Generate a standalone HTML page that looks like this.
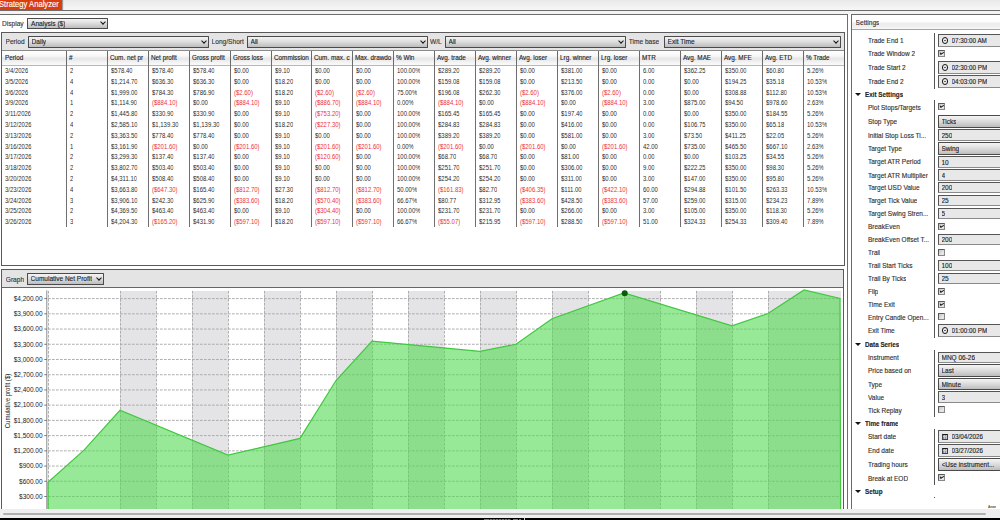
<!DOCTYPE html><html><head><meta charset="utf-8"><style>

*{margin:0;padding:0;box-sizing:border-box}
html,body{width:1000px;height:520px;overflow:hidden;background:#fff;font-family:"Liberation Sans",sans-serif;color:#222}
.a{position:absolute}
.t{position:absolute;white-space:nowrap;overflow:hidden;-webkit-text-stroke:0.12px currentColor}
.sel{position:absolute;border:1px solid #4a4a4a;border-radius:0.6px;background:linear-gradient(#f4f4f4,#dedede 45%,#bdbdbd)}
.chev{position:absolute;width:4px;height:4px;border-right:1.5px solid #111;border-bottom:1.5px solid #111;transform:rotate(45deg)}
.box{position:absolute;border:1px solid #8a8a8a;border-top-color:#555;border-left-color:#555;background:#e8e8e8}
.cb{position:absolute;width:7px;height:7px;border:1px solid #5a5a5a;border-right-color:#888;border-bottom-color:#888;background:linear-gradient(135deg,#c4c4c4,#e8e8e8 70%,#dcdcdc);border-radius:0.5px}
.chk{position:absolute;left:0.9px;top:1.3px;width:3.6px;height:2px;border-left:1.6px solid #111;border-bottom:1.6px solid #111;transform:rotate(-30deg)}

</style></head><body>
<div class="a" style="left:0;top:0;width:1000px;height:10px;background:linear-gradient(#e9e9e9,#f7f7f7)"></div>
<div class="a" style="left:0;top:0;width:62px;height:10px;background:#dc3d0c;box-shadow:1px 0 1px rgba(0,0,0,.35)"></div>
<div class="t" style="left:-0.6px;top:-0.4px;height:10px;line-height:9.4px;font-size:8.4px;color:#fff;transform:scaleX(0.91);transform-origin:0 0">Strategy Analyzer</div>
<div class="a" style="left:0;top:9.5px;width:1000px;height:1px;background:#6c6c6c"></div>
<div class="a" style="left:0;top:10.5px;width:1000px;height:3.5px;background:#f3f3f3"></div>
<div class="a" style="left:-1px;top:13.6px;width:848.8px;height:520px;border:1px solid #6e6e6e;background:#fff"></div>
<div class="t" style="left:2px;top:19px;line-height:9px;font-size:6.6px;color:#333">Display</div>
<div class="a" style="left:1px;top:32px;width:844px;height:234px;border:1px solid #5a5a5a;background:#fff"></div>
<div class="a" style="left:2px;top:33px;width:842px;height:17.5px;background:#e4e4e4"></div>
<div class="sel" style="left:27px;top:18px;width:81px;height:11px"></div>
<div class="t" style="left:31px;top:18.6px;line-height:9px;font-size:6.6px;color:#222">Analysis ($)</div>
<div class="chev" style="left:100.8px;top:20.4px"></div>
<div class="t" style="left:5.5px;top:37.1px;line-height:9px;font-size:6.6px;color:#333;">Period</div>
<div class="sel" style="left:28px;top:36px;width:181px;height:12px"></div>
<div class="t" style="left:31.5px;top:37.1px;line-height:9px;font-size:6.6px;color:#222">Daily</div>
<div class="chev" style="left:201.8px;top:38.900000000000006px"></div>
<div class="t" style="left:211.6px;top:37.1px;line-height:9px;font-size:6.6px;color:#333;">Long/Short</div>
<div class="sel" style="left:247px;top:36px;width:181px;height:12px"></div>
<div class="t" style="left:250.5px;top:37.1px;line-height:9px;font-size:6.6px;color:#222">All</div>
<div class="chev" style="left:420.8px;top:38.900000000000006px"></div>
<div class="t" style="left:430px;top:37.1px;line-height:9px;font-size:6.6px;color:#333;">W/L</div>
<div class="sel" style="left:445px;top:36px;width:181px;height:12px"></div>
<div class="t" style="left:448.5px;top:37.1px;line-height:9px;font-size:6.6px;color:#222">All</div>
<div class="chev" style="left:618.8px;top:38.900000000000006px"></div>
<div class="t" style="left:628.7px;top:37.1px;line-height:9px;font-size:6.6px;color:#333;">Time base</div>
<div class="sel" style="left:664px;top:36px;width:177px;height:12px"></div>
<div class="t" style="left:667.5px;top:37.1px;line-height:9px;font-size:6.6px;color:#222">Exit Time</div>
<div class="chev" style="left:833.8px;top:38.900000000000006px"></div>
<div class="a" style="left:2px;top:50px;width:842px;height:1px;background:#8a8a8a"></div>
<div class="a" style="left:2px;top:51px;width:842px;height:13.7px;background:linear-gradient(#ffffff,#f7f7f7 35%,#e6e6e6 55%,#f3f3f3 80%,#fafafa)"></div>
<div class="a" style="left:2px;top:64.6px;width:842px;height:0.8px;background:#b8b8b8"></div>
<div class="t" style="left:5.0px;top:52.9px;width:59.5px;line-height:9px;font-size:6.35px;color:#222">Period</div>
<div class="t" style="left:69.0px;top:52.9px;width:36.5px;line-height:9px;font-size:6.35px;color:#222">#</div>
<div class="t" style="left:110.0px;top:52.9px;width:36.5px;line-height:9px;font-size:6.35px;color:#222">Cum. net pr</div>
<div class="t" style="left:151.0px;top:52.9px;width:36.5px;line-height:9px;font-size:6.35px;color:#222">Net profit</div>
<div class="t" style="left:192.0px;top:52.9px;width:36.5px;line-height:9px;font-size:6.35px;color:#222">Gross profit</div>
<div class="t" style="left:233.0px;top:52.9px;width:36.5px;line-height:9px;font-size:6.35px;color:#222">Gross loss</div>
<div class="t" style="left:274.0px;top:52.9px;width:35.5px;line-height:9px;font-size:6.35px;color:#222">Commission</div>
<div class="t" style="left:314.0px;top:52.9px;width:36.5px;line-height:9px;font-size:6.35px;color:#222">Cum. max. c</div>
<div class="t" style="left:355.0px;top:52.9px;width:36.5px;line-height:9px;font-size:6.35px;color:#222">Max. drawdo</div>
<div class="t" style="left:396.0px;top:52.9px;width:36.5px;line-height:9px;font-size:6.35px;color:#222">% Win</div>
<div class="t" style="left:437.0px;top:52.9px;width:36.5px;line-height:9px;font-size:6.35px;color:#222">Avg. trade</div>
<div class="t" style="left:478.0px;top:52.9px;width:36.5px;line-height:9px;font-size:6.35px;color:#222">Avg. winner</div>
<div class="t" style="left:519.0px;top:52.9px;width:36.5px;line-height:9px;font-size:6.35px;color:#222">Avg. loser</div>
<div class="t" style="left:560.0px;top:52.9px;width:36.5px;line-height:9px;font-size:6.35px;color:#222">Lrg. winner</div>
<div class="t" style="left:601.0px;top:52.9px;width:36.5px;line-height:9px;font-size:6.35px;color:#222">Lrg. loser</div>
<div class="t" style="left:642.0px;top:52.9px;width:36.5px;line-height:9px;font-size:6.35px;color:#222">MTR</div>
<div class="t" style="left:683.0px;top:52.9px;width:36.5px;line-height:9px;font-size:6.35px;color:#222">Avg. MAE</div>
<div class="t" style="left:724.0px;top:52.9px;width:36.5px;line-height:9px;font-size:6.35px;color:#222">Avg. MFE</div>
<div class="t" style="left:765.0px;top:52.9px;width:36.5px;line-height:9px;font-size:6.35px;color:#222">Avg. ETD</div>
<div class="t" style="left:806.0px;top:52.9px;width:36.5px;line-height:9px;font-size:6.35px;color:#222">% Trade</div>
<div class="a" style="left:66px;top:50.8px;width:1px;height:14.2px;background:#6a6a6a"></div>
<div class="a" style="left:66px;top:65px;width:1px;height:162px;background:#6f6f6f"></div>
<div class="a" style="left:107px;top:50.8px;width:1px;height:14.2px;background:#6a6a6a"></div>
<div class="a" style="left:107px;top:65px;width:1px;height:162px;background:#6f6f6f"></div>
<div class="a" style="left:148px;top:50.8px;width:1px;height:14.2px;background:#6a6a6a"></div>
<div class="a" style="left:148px;top:65px;width:1px;height:162px;background:#6f6f6f"></div>
<div class="a" style="left:189px;top:50.8px;width:1px;height:14.2px;background:#6a6a6a"></div>
<div class="a" style="left:189px;top:65px;width:1px;height:162px;background:#6f6f6f"></div>
<div class="a" style="left:230px;top:50.8px;width:1px;height:14.2px;background:#6a6a6a"></div>
<div class="a" style="left:230px;top:65px;width:1px;height:162px;background:#6f6f6f"></div>
<div class="a" style="left:271px;top:50.8px;width:1px;height:14.2px;background:#6a6a6a"></div>
<div class="a" style="left:271px;top:65px;width:1px;height:162px;background:#6f6f6f"></div>
<div class="a" style="left:311px;top:50.8px;width:1px;height:14.2px;background:#6a6a6a"></div>
<div class="a" style="left:311px;top:65px;width:1px;height:162px;background:#6f6f6f"></div>
<div class="a" style="left:352px;top:50.8px;width:1px;height:14.2px;background:#6a6a6a"></div>
<div class="a" style="left:352px;top:65px;width:1px;height:162px;background:#6f6f6f"></div>
<div class="a" style="left:393px;top:50.8px;width:1px;height:14.2px;background:#6a6a6a"></div>
<div class="a" style="left:393px;top:65px;width:1px;height:162px;background:#6f6f6f"></div>
<div class="a" style="left:434px;top:50.8px;width:1px;height:14.2px;background:#6a6a6a"></div>
<div class="a" style="left:434px;top:65px;width:1px;height:162px;background:#6f6f6f"></div>
<div class="a" style="left:475px;top:50.8px;width:1px;height:14.2px;background:#6a6a6a"></div>
<div class="a" style="left:475px;top:65px;width:1px;height:162px;background:#6f6f6f"></div>
<div class="a" style="left:516px;top:50.8px;width:1px;height:14.2px;background:#6a6a6a"></div>
<div class="a" style="left:516px;top:65px;width:1px;height:162px;background:#6f6f6f"></div>
<div class="a" style="left:557px;top:50.8px;width:1px;height:14.2px;background:#6a6a6a"></div>
<div class="a" style="left:557px;top:65px;width:1px;height:162px;background:#6f6f6f"></div>
<div class="a" style="left:598px;top:50.8px;width:1px;height:14.2px;background:#6a6a6a"></div>
<div class="a" style="left:598px;top:65px;width:1px;height:162px;background:#6f6f6f"></div>
<div class="a" style="left:639px;top:50.8px;width:1px;height:14.2px;background:#6a6a6a"></div>
<div class="a" style="left:639px;top:65px;width:1px;height:162px;background:#6f6f6f"></div>
<div class="a" style="left:680px;top:50.8px;width:1px;height:14.2px;background:#6a6a6a"></div>
<div class="a" style="left:680px;top:65px;width:1px;height:162px;background:#6f6f6f"></div>
<div class="a" style="left:721px;top:50.8px;width:1px;height:14.2px;background:#6a6a6a"></div>
<div class="a" style="left:721px;top:65px;width:1px;height:162px;background:#6f6f6f"></div>
<div class="a" style="left:762px;top:50.8px;width:1px;height:14.2px;background:#6a6a6a"></div>
<div class="a" style="left:762px;top:65px;width:1px;height:162px;background:#6f6f6f"></div>
<div class="a" style="left:803px;top:50.8px;width:1px;height:14.2px;background:#6a6a6a"></div>
<div class="a" style="left:803px;top:65px;width:1px;height:162px;background:#6f6f6f"></div>
<div class="t" style="left:5.3px;top:66.1px;line-height:9px;font-size:7.2px;color:#2c2c2c;-webkit-text-stroke:0;transform:scaleX(0.83);transform-origin:0 0">3/4/2026</div>
<div class="t" style="left:70.3px;top:66.1px;line-height:9px;font-size:7.2px;color:#2c2c2c;-webkit-text-stroke:0;transform:scaleX(0.83);transform-origin:0 0">2</div>
<div class="t" style="left:111.3px;top:66.1px;line-height:9px;font-size:7.2px;color:#2c2c2c;-webkit-text-stroke:0;transform:scaleX(0.83);transform-origin:0 0">$578.40</div>
<div class="t" style="left:152.3px;top:66.1px;line-height:9px;font-size:7.2px;color:#2c2c2c;-webkit-text-stroke:0;transform:scaleX(0.83);transform-origin:0 0">$578.40</div>
<div class="t" style="left:193.3px;top:66.1px;line-height:9px;font-size:7.2px;color:#2c2c2c;-webkit-text-stroke:0;transform:scaleX(0.83);transform-origin:0 0">$578.40</div>
<div class="t" style="left:234.3px;top:66.1px;line-height:9px;font-size:7.2px;color:#2c2c2c;-webkit-text-stroke:0;transform:scaleX(0.83);transform-origin:0 0">$0.00</div>
<div class="t" style="left:275.3px;top:66.1px;line-height:9px;font-size:7.2px;color:#2c2c2c;-webkit-text-stroke:0;transform:scaleX(0.83);transform-origin:0 0">$9.10</div>
<div class="t" style="left:315.3px;top:66.1px;line-height:9px;font-size:7.2px;color:#2c2c2c;-webkit-text-stroke:0;transform:scaleX(0.83);transform-origin:0 0">$0.00</div>
<div class="t" style="left:356.3px;top:66.1px;line-height:9px;font-size:7.2px;color:#2c2c2c;-webkit-text-stroke:0;transform:scaleX(0.83);transform-origin:0 0">$0.00</div>
<div class="t" style="left:397.3px;top:66.1px;line-height:9px;font-size:7.2px;color:#2c2c2c;-webkit-text-stroke:0;transform:scaleX(0.83);transform-origin:0 0">100.00%</div>
<div class="t" style="left:438.3px;top:66.1px;line-height:9px;font-size:7.2px;color:#2c2c2c;-webkit-text-stroke:0;transform:scaleX(0.83);transform-origin:0 0">$289.20</div>
<div class="t" style="left:479.3px;top:66.1px;line-height:9px;font-size:7.2px;color:#2c2c2c;-webkit-text-stroke:0;transform:scaleX(0.83);transform-origin:0 0">$289.20</div>
<div class="t" style="left:520.3px;top:66.1px;line-height:9px;font-size:7.2px;color:#2c2c2c;-webkit-text-stroke:0;transform:scaleX(0.83);transform-origin:0 0">$0.00</div>
<div class="t" style="left:561.3px;top:66.1px;line-height:9px;font-size:7.2px;color:#2c2c2c;-webkit-text-stroke:0;transform:scaleX(0.83);transform-origin:0 0">$381.00</div>
<div class="t" style="left:602.3px;top:66.1px;line-height:9px;font-size:7.2px;color:#2c2c2c;-webkit-text-stroke:0;transform:scaleX(0.83);transform-origin:0 0">$0.00</div>
<div class="t" style="left:643.3px;top:66.1px;line-height:9px;font-size:7.2px;color:#2c2c2c;-webkit-text-stroke:0;transform:scaleX(0.83);transform-origin:0 0">6.00</div>
<div class="t" style="left:684.3px;top:66.1px;line-height:9px;font-size:7.2px;color:#2c2c2c;-webkit-text-stroke:0;transform:scaleX(0.83);transform-origin:0 0">$362.25</div>
<div class="t" style="left:725.3px;top:66.1px;line-height:9px;font-size:7.2px;color:#2c2c2c;-webkit-text-stroke:0;transform:scaleX(0.83);transform-origin:0 0">$350.00</div>
<div class="t" style="left:766.3px;top:66.1px;line-height:9px;font-size:7.2px;color:#2c2c2c;-webkit-text-stroke:0;transform:scaleX(0.83);transform-origin:0 0">$60.80</div>
<div class="t" style="left:807.3px;top:66.1px;line-height:9px;font-size:7.2px;color:#2c2c2c;-webkit-text-stroke:0;transform:scaleX(0.83);transform-origin:0 0">5.26%</div>
<div class="t" style="left:5.3px;top:76.89299999999999px;line-height:9px;font-size:7.2px;color:#2c2c2c;-webkit-text-stroke:0;transform:scaleX(0.83);transform-origin:0 0">3/5/2026</div>
<div class="t" style="left:70.3px;top:76.89299999999999px;line-height:9px;font-size:7.2px;color:#2c2c2c;-webkit-text-stroke:0;transform:scaleX(0.83);transform-origin:0 0">4</div>
<div class="t" style="left:111.3px;top:76.89299999999999px;line-height:9px;font-size:7.2px;color:#2c2c2c;-webkit-text-stroke:0;transform:scaleX(0.83);transform-origin:0 0">$1,214.70</div>
<div class="t" style="left:152.3px;top:76.89299999999999px;line-height:9px;font-size:7.2px;color:#2c2c2c;-webkit-text-stroke:0;transform:scaleX(0.83);transform-origin:0 0">$636.30</div>
<div class="t" style="left:193.3px;top:76.89299999999999px;line-height:9px;font-size:7.2px;color:#2c2c2c;-webkit-text-stroke:0;transform:scaleX(0.83);transform-origin:0 0">$636.30</div>
<div class="t" style="left:234.3px;top:76.89299999999999px;line-height:9px;font-size:7.2px;color:#2c2c2c;-webkit-text-stroke:0;transform:scaleX(0.83);transform-origin:0 0">$0.00</div>
<div class="t" style="left:275.3px;top:76.89299999999999px;line-height:9px;font-size:7.2px;color:#2c2c2c;-webkit-text-stroke:0;transform:scaleX(0.83);transform-origin:0 0">$18.20</div>
<div class="t" style="left:315.3px;top:76.89299999999999px;line-height:9px;font-size:7.2px;color:#2c2c2c;-webkit-text-stroke:0;transform:scaleX(0.83);transform-origin:0 0">$0.00</div>
<div class="t" style="left:356.3px;top:76.89299999999999px;line-height:9px;font-size:7.2px;color:#2c2c2c;-webkit-text-stroke:0;transform:scaleX(0.83);transform-origin:0 0">$0.00</div>
<div class="t" style="left:397.3px;top:76.89299999999999px;line-height:9px;font-size:7.2px;color:#2c2c2c;-webkit-text-stroke:0;transform:scaleX(0.83);transform-origin:0 0">100.00%</div>
<div class="t" style="left:438.3px;top:76.89299999999999px;line-height:9px;font-size:7.2px;color:#2c2c2c;-webkit-text-stroke:0;transform:scaleX(0.83);transform-origin:0 0">$159.08</div>
<div class="t" style="left:479.3px;top:76.89299999999999px;line-height:9px;font-size:7.2px;color:#2c2c2c;-webkit-text-stroke:0;transform:scaleX(0.83);transform-origin:0 0">$159.08</div>
<div class="t" style="left:520.3px;top:76.89299999999999px;line-height:9px;font-size:7.2px;color:#2c2c2c;-webkit-text-stroke:0;transform:scaleX(0.83);transform-origin:0 0">$0.00</div>
<div class="t" style="left:561.3px;top:76.89299999999999px;line-height:9px;font-size:7.2px;color:#2c2c2c;-webkit-text-stroke:0;transform:scaleX(0.83);transform-origin:0 0">$213.50</div>
<div class="t" style="left:602.3px;top:76.89299999999999px;line-height:9px;font-size:7.2px;color:#2c2c2c;-webkit-text-stroke:0;transform:scaleX(0.83);transform-origin:0 0">$0.00</div>
<div class="t" style="left:643.3px;top:76.89299999999999px;line-height:9px;font-size:7.2px;color:#2c2c2c;-webkit-text-stroke:0;transform:scaleX(0.83);transform-origin:0 0">0.00</div>
<div class="t" style="left:684.3px;top:76.89299999999999px;line-height:9px;font-size:7.2px;color:#2c2c2c;-webkit-text-stroke:0;transform:scaleX(0.83);transform-origin:0 0">$0.00</div>
<div class="t" style="left:725.3px;top:76.89299999999999px;line-height:9px;font-size:7.2px;color:#2c2c2c;-webkit-text-stroke:0;transform:scaleX(0.83);transform-origin:0 0">$194.25</div>
<div class="t" style="left:766.3px;top:76.89299999999999px;line-height:9px;font-size:7.2px;color:#2c2c2c;-webkit-text-stroke:0;transform:scaleX(0.83);transform-origin:0 0">$35.18</div>
<div class="t" style="left:807.3px;top:76.89299999999999px;line-height:9px;font-size:7.2px;color:#2c2c2c;-webkit-text-stroke:0;transform:scaleX(0.83);transform-origin:0 0">10.53%</div>
<div class="t" style="left:5.3px;top:87.68599999999999px;line-height:9px;font-size:7.2px;color:#2c2c2c;-webkit-text-stroke:0;transform:scaleX(0.83);transform-origin:0 0">3/6/2026</div>
<div class="t" style="left:70.3px;top:87.68599999999999px;line-height:9px;font-size:7.2px;color:#2c2c2c;-webkit-text-stroke:0;transform:scaleX(0.83);transform-origin:0 0">4</div>
<div class="t" style="left:111.3px;top:87.68599999999999px;line-height:9px;font-size:7.2px;color:#2c2c2c;-webkit-text-stroke:0;transform:scaleX(0.83);transform-origin:0 0">$1,999.00</div>
<div class="t" style="left:152.3px;top:87.68599999999999px;line-height:9px;font-size:7.2px;color:#2c2c2c;-webkit-text-stroke:0;transform:scaleX(0.83);transform-origin:0 0">$784.30</div>
<div class="t" style="left:193.3px;top:87.68599999999999px;line-height:9px;font-size:7.2px;color:#2c2c2c;-webkit-text-stroke:0;transform:scaleX(0.83);transform-origin:0 0">$786.90</div>
<div class="t" style="left:234.3px;top:87.68599999999999px;line-height:9px;font-size:7.2px;color:#ee3038;-webkit-text-stroke:0;transform:scaleX(0.83);transform-origin:0 0">($2.60)</div>
<div class="t" style="left:275.3px;top:87.68599999999999px;line-height:9px;font-size:7.2px;color:#2c2c2c;-webkit-text-stroke:0;transform:scaleX(0.83);transform-origin:0 0">$18.20</div>
<div class="t" style="left:315.3px;top:87.68599999999999px;line-height:9px;font-size:7.2px;color:#ee3038;-webkit-text-stroke:0;transform:scaleX(0.83);transform-origin:0 0">($2.60)</div>
<div class="t" style="left:356.3px;top:87.68599999999999px;line-height:9px;font-size:7.2px;color:#ee3038;-webkit-text-stroke:0;transform:scaleX(0.83);transform-origin:0 0">($2.60)</div>
<div class="t" style="left:397.3px;top:87.68599999999999px;line-height:9px;font-size:7.2px;color:#2c2c2c;-webkit-text-stroke:0;transform:scaleX(0.83);transform-origin:0 0">75.00%</div>
<div class="t" style="left:438.3px;top:87.68599999999999px;line-height:9px;font-size:7.2px;color:#2c2c2c;-webkit-text-stroke:0;transform:scaleX(0.83);transform-origin:0 0">$196.08</div>
<div class="t" style="left:479.3px;top:87.68599999999999px;line-height:9px;font-size:7.2px;color:#2c2c2c;-webkit-text-stroke:0;transform:scaleX(0.83);transform-origin:0 0">$262.30</div>
<div class="t" style="left:520.3px;top:87.68599999999999px;line-height:9px;font-size:7.2px;color:#ee3038;-webkit-text-stroke:0;transform:scaleX(0.83);transform-origin:0 0">($2.60)</div>
<div class="t" style="left:561.3px;top:87.68599999999999px;line-height:9px;font-size:7.2px;color:#2c2c2c;-webkit-text-stroke:0;transform:scaleX(0.83);transform-origin:0 0">$376.00</div>
<div class="t" style="left:602.3px;top:87.68599999999999px;line-height:9px;font-size:7.2px;color:#ee3038;-webkit-text-stroke:0;transform:scaleX(0.83);transform-origin:0 0">($2.60)</div>
<div class="t" style="left:643.3px;top:87.68599999999999px;line-height:9px;font-size:7.2px;color:#2c2c2c;-webkit-text-stroke:0;transform:scaleX(0.83);transform-origin:0 0">0.00</div>
<div class="t" style="left:684.3px;top:87.68599999999999px;line-height:9px;font-size:7.2px;color:#2c2c2c;-webkit-text-stroke:0;transform:scaleX(0.83);transform-origin:0 0">$0.00</div>
<div class="t" style="left:725.3px;top:87.68599999999999px;line-height:9px;font-size:7.2px;color:#2c2c2c;-webkit-text-stroke:0;transform:scaleX(0.83);transform-origin:0 0">$308.88</div>
<div class="t" style="left:766.3px;top:87.68599999999999px;line-height:9px;font-size:7.2px;color:#2c2c2c;-webkit-text-stroke:0;transform:scaleX(0.83);transform-origin:0 0">$112.80</div>
<div class="t" style="left:807.3px;top:87.68599999999999px;line-height:9px;font-size:7.2px;color:#2c2c2c;-webkit-text-stroke:0;transform:scaleX(0.83);transform-origin:0 0">10.53%</div>
<div class="t" style="left:5.3px;top:98.479px;line-height:9px;font-size:7.2px;color:#2c2c2c;-webkit-text-stroke:0;transform:scaleX(0.83);transform-origin:0 0">3/9/2026</div>
<div class="t" style="left:70.3px;top:98.479px;line-height:9px;font-size:7.2px;color:#2c2c2c;-webkit-text-stroke:0;transform:scaleX(0.83);transform-origin:0 0">1</div>
<div class="t" style="left:111.3px;top:98.479px;line-height:9px;font-size:7.2px;color:#2c2c2c;-webkit-text-stroke:0;transform:scaleX(0.83);transform-origin:0 0">$1,114.90</div>
<div class="t" style="left:152.3px;top:98.479px;line-height:9px;font-size:7.2px;color:#ee3038;-webkit-text-stroke:0;transform:scaleX(0.83);transform-origin:0 0">($884.10)</div>
<div class="t" style="left:193.3px;top:98.479px;line-height:9px;font-size:7.2px;color:#2c2c2c;-webkit-text-stroke:0;transform:scaleX(0.83);transform-origin:0 0">$0.00</div>
<div class="t" style="left:234.3px;top:98.479px;line-height:9px;font-size:7.2px;color:#ee3038;-webkit-text-stroke:0;transform:scaleX(0.83);transform-origin:0 0">($884.10)</div>
<div class="t" style="left:275.3px;top:98.479px;line-height:9px;font-size:7.2px;color:#2c2c2c;-webkit-text-stroke:0;transform:scaleX(0.83);transform-origin:0 0">$9.10</div>
<div class="t" style="left:315.3px;top:98.479px;line-height:9px;font-size:7.2px;color:#ee3038;-webkit-text-stroke:0;transform:scaleX(0.83);transform-origin:0 0">($886.70)</div>
<div class="t" style="left:356.3px;top:98.479px;line-height:9px;font-size:7.2px;color:#ee3038;-webkit-text-stroke:0;transform:scaleX(0.83);transform-origin:0 0">($884.10)</div>
<div class="t" style="left:397.3px;top:98.479px;line-height:9px;font-size:7.2px;color:#2c2c2c;-webkit-text-stroke:0;transform:scaleX(0.83);transform-origin:0 0">0.00%</div>
<div class="t" style="left:438.3px;top:98.479px;line-height:9px;font-size:7.2px;color:#ee3038;-webkit-text-stroke:0;transform:scaleX(0.83);transform-origin:0 0">($884.10)</div>
<div class="t" style="left:479.3px;top:98.479px;line-height:9px;font-size:7.2px;color:#2c2c2c;-webkit-text-stroke:0;transform:scaleX(0.83);transform-origin:0 0">$0.00</div>
<div class="t" style="left:520.3px;top:98.479px;line-height:9px;font-size:7.2px;color:#ee3038;-webkit-text-stroke:0;transform:scaleX(0.83);transform-origin:0 0">($884.10)</div>
<div class="t" style="left:561.3px;top:98.479px;line-height:9px;font-size:7.2px;color:#2c2c2c;-webkit-text-stroke:0;transform:scaleX(0.83);transform-origin:0 0">$0.00</div>
<div class="t" style="left:602.3px;top:98.479px;line-height:9px;font-size:7.2px;color:#ee3038;-webkit-text-stroke:0;transform:scaleX(0.83);transform-origin:0 0">($884.10)</div>
<div class="t" style="left:643.3px;top:98.479px;line-height:9px;font-size:7.2px;color:#2c2c2c;-webkit-text-stroke:0;transform:scaleX(0.83);transform-origin:0 0">3.00</div>
<div class="t" style="left:684.3px;top:98.479px;line-height:9px;font-size:7.2px;color:#2c2c2c;-webkit-text-stroke:0;transform:scaleX(0.83);transform-origin:0 0">$875.00</div>
<div class="t" style="left:725.3px;top:98.479px;line-height:9px;font-size:7.2px;color:#2c2c2c;-webkit-text-stroke:0;transform:scaleX(0.83);transform-origin:0 0">$94.50</div>
<div class="t" style="left:766.3px;top:98.479px;line-height:9px;font-size:7.2px;color:#2c2c2c;-webkit-text-stroke:0;transform:scaleX(0.83);transform-origin:0 0">$978.60</div>
<div class="t" style="left:807.3px;top:98.479px;line-height:9px;font-size:7.2px;color:#2c2c2c;-webkit-text-stroke:0;transform:scaleX(0.83);transform-origin:0 0">2.63%</div>
<div class="t" style="left:5.3px;top:109.27199999999999px;line-height:9px;font-size:7.2px;color:#2c2c2c;-webkit-text-stroke:0;transform:scaleX(0.83);transform-origin:0 0">3/11/2026</div>
<div class="t" style="left:70.3px;top:109.27199999999999px;line-height:9px;font-size:7.2px;color:#2c2c2c;-webkit-text-stroke:0;transform:scaleX(0.83);transform-origin:0 0">2</div>
<div class="t" style="left:111.3px;top:109.27199999999999px;line-height:9px;font-size:7.2px;color:#2c2c2c;-webkit-text-stroke:0;transform:scaleX(0.83);transform-origin:0 0">$1,445.80</div>
<div class="t" style="left:152.3px;top:109.27199999999999px;line-height:9px;font-size:7.2px;color:#2c2c2c;-webkit-text-stroke:0;transform:scaleX(0.83);transform-origin:0 0">$330.90</div>
<div class="t" style="left:193.3px;top:109.27199999999999px;line-height:9px;font-size:7.2px;color:#2c2c2c;-webkit-text-stroke:0;transform:scaleX(0.83);transform-origin:0 0">$330.90</div>
<div class="t" style="left:234.3px;top:109.27199999999999px;line-height:9px;font-size:7.2px;color:#2c2c2c;-webkit-text-stroke:0;transform:scaleX(0.83);transform-origin:0 0">$0.00</div>
<div class="t" style="left:275.3px;top:109.27199999999999px;line-height:9px;font-size:7.2px;color:#2c2c2c;-webkit-text-stroke:0;transform:scaleX(0.83);transform-origin:0 0">$9.10</div>
<div class="t" style="left:315.3px;top:109.27199999999999px;line-height:9px;font-size:7.2px;color:#ee3038;-webkit-text-stroke:0;transform:scaleX(0.83);transform-origin:0 0">($753.20)</div>
<div class="t" style="left:356.3px;top:109.27199999999999px;line-height:9px;font-size:7.2px;color:#2c2c2c;-webkit-text-stroke:0;transform:scaleX(0.83);transform-origin:0 0">$0.00</div>
<div class="t" style="left:397.3px;top:109.27199999999999px;line-height:9px;font-size:7.2px;color:#2c2c2c;-webkit-text-stroke:0;transform:scaleX(0.83);transform-origin:0 0">100.00%</div>
<div class="t" style="left:438.3px;top:109.27199999999999px;line-height:9px;font-size:7.2px;color:#2c2c2c;-webkit-text-stroke:0;transform:scaleX(0.83);transform-origin:0 0">$165.45</div>
<div class="t" style="left:479.3px;top:109.27199999999999px;line-height:9px;font-size:7.2px;color:#2c2c2c;-webkit-text-stroke:0;transform:scaleX(0.83);transform-origin:0 0">$165.45</div>
<div class="t" style="left:520.3px;top:109.27199999999999px;line-height:9px;font-size:7.2px;color:#2c2c2c;-webkit-text-stroke:0;transform:scaleX(0.83);transform-origin:0 0">$0.00</div>
<div class="t" style="left:561.3px;top:109.27199999999999px;line-height:9px;font-size:7.2px;color:#2c2c2c;-webkit-text-stroke:0;transform:scaleX(0.83);transform-origin:0 0">$197.40</div>
<div class="t" style="left:602.3px;top:109.27199999999999px;line-height:9px;font-size:7.2px;color:#2c2c2c;-webkit-text-stroke:0;transform:scaleX(0.83);transform-origin:0 0">$0.00</div>
<div class="t" style="left:643.3px;top:109.27199999999999px;line-height:9px;font-size:7.2px;color:#2c2c2c;-webkit-text-stroke:0;transform:scaleX(0.83);transform-origin:0 0">0.00</div>
<div class="t" style="left:684.3px;top:109.27199999999999px;line-height:9px;font-size:7.2px;color:#2c2c2c;-webkit-text-stroke:0;transform:scaleX(0.83);transform-origin:0 0">$0.00</div>
<div class="t" style="left:725.3px;top:109.27199999999999px;line-height:9px;font-size:7.2px;color:#2c2c2c;-webkit-text-stroke:0;transform:scaleX(0.83);transform-origin:0 0">$350.00</div>
<div class="t" style="left:766.3px;top:109.27199999999999px;line-height:9px;font-size:7.2px;color:#2c2c2c;-webkit-text-stroke:0;transform:scaleX(0.83);transform-origin:0 0">$184.55</div>
<div class="t" style="left:807.3px;top:109.27199999999999px;line-height:9px;font-size:7.2px;color:#2c2c2c;-webkit-text-stroke:0;transform:scaleX(0.83);transform-origin:0 0">5.26%</div>
<div class="t" style="left:5.3px;top:120.06499999999998px;line-height:9px;font-size:7.2px;color:#2c2c2c;-webkit-text-stroke:0;transform:scaleX(0.83);transform-origin:0 0">3/12/2026</div>
<div class="t" style="left:70.3px;top:120.06499999999998px;line-height:9px;font-size:7.2px;color:#2c2c2c;-webkit-text-stroke:0;transform:scaleX(0.83);transform-origin:0 0">4</div>
<div class="t" style="left:111.3px;top:120.06499999999998px;line-height:9px;font-size:7.2px;color:#2c2c2c;-webkit-text-stroke:0;transform:scaleX(0.83);transform-origin:0 0">$2,585.10</div>
<div class="t" style="left:152.3px;top:120.06499999999998px;line-height:9px;font-size:7.2px;color:#2c2c2c;-webkit-text-stroke:0;transform:scaleX(0.83);transform-origin:0 0">$1,139.30</div>
<div class="t" style="left:193.3px;top:120.06499999999998px;line-height:9px;font-size:7.2px;color:#2c2c2c;-webkit-text-stroke:0;transform:scaleX(0.83);transform-origin:0 0">$1,139.30</div>
<div class="t" style="left:234.3px;top:120.06499999999998px;line-height:9px;font-size:7.2px;color:#2c2c2c;-webkit-text-stroke:0;transform:scaleX(0.83);transform-origin:0 0">$0.00</div>
<div class="t" style="left:275.3px;top:120.06499999999998px;line-height:9px;font-size:7.2px;color:#2c2c2c;-webkit-text-stroke:0;transform:scaleX(0.83);transform-origin:0 0">$18.20</div>
<div class="t" style="left:315.3px;top:120.06499999999998px;line-height:9px;font-size:7.2px;color:#ee3038;-webkit-text-stroke:0;transform:scaleX(0.83);transform-origin:0 0">($227.30)</div>
<div class="t" style="left:356.3px;top:120.06499999999998px;line-height:9px;font-size:7.2px;color:#2c2c2c;-webkit-text-stroke:0;transform:scaleX(0.83);transform-origin:0 0">$0.00</div>
<div class="t" style="left:397.3px;top:120.06499999999998px;line-height:9px;font-size:7.2px;color:#2c2c2c;-webkit-text-stroke:0;transform:scaleX(0.83);transform-origin:0 0">100.00%</div>
<div class="t" style="left:438.3px;top:120.06499999999998px;line-height:9px;font-size:7.2px;color:#2c2c2c;-webkit-text-stroke:0;transform:scaleX(0.83);transform-origin:0 0">$284.83</div>
<div class="t" style="left:479.3px;top:120.06499999999998px;line-height:9px;font-size:7.2px;color:#2c2c2c;-webkit-text-stroke:0;transform:scaleX(0.83);transform-origin:0 0">$284.83</div>
<div class="t" style="left:520.3px;top:120.06499999999998px;line-height:9px;font-size:7.2px;color:#2c2c2c;-webkit-text-stroke:0;transform:scaleX(0.83);transform-origin:0 0">$0.00</div>
<div class="t" style="left:561.3px;top:120.06499999999998px;line-height:9px;font-size:7.2px;color:#2c2c2c;-webkit-text-stroke:0;transform:scaleX(0.83);transform-origin:0 0">$416.00</div>
<div class="t" style="left:602.3px;top:120.06499999999998px;line-height:9px;font-size:7.2px;color:#2c2c2c;-webkit-text-stroke:0;transform:scaleX(0.83);transform-origin:0 0">$0.00</div>
<div class="t" style="left:643.3px;top:120.06499999999998px;line-height:9px;font-size:7.2px;color:#2c2c2c;-webkit-text-stroke:0;transform:scaleX(0.83);transform-origin:0 0">0.00</div>
<div class="t" style="left:684.3px;top:120.06499999999998px;line-height:9px;font-size:7.2px;color:#2c2c2c;-webkit-text-stroke:0;transform:scaleX(0.83);transform-origin:0 0">$106.75</div>
<div class="t" style="left:725.3px;top:120.06499999999998px;line-height:9px;font-size:7.2px;color:#2c2c2c;-webkit-text-stroke:0;transform:scaleX(0.83);transform-origin:0 0">$350.00</div>
<div class="t" style="left:766.3px;top:120.06499999999998px;line-height:9px;font-size:7.2px;color:#2c2c2c;-webkit-text-stroke:0;transform:scaleX(0.83);transform-origin:0 0">$65.18</div>
<div class="t" style="left:807.3px;top:120.06499999999998px;line-height:9px;font-size:7.2px;color:#2c2c2c;-webkit-text-stroke:0;transform:scaleX(0.83);transform-origin:0 0">10.53%</div>
<div class="t" style="left:5.3px;top:130.858px;line-height:9px;font-size:7.2px;color:#2c2c2c;-webkit-text-stroke:0;transform:scaleX(0.83);transform-origin:0 0">3/13/2026</div>
<div class="t" style="left:70.3px;top:130.858px;line-height:9px;font-size:7.2px;color:#2c2c2c;-webkit-text-stroke:0;transform:scaleX(0.83);transform-origin:0 0">2</div>
<div class="t" style="left:111.3px;top:130.858px;line-height:9px;font-size:7.2px;color:#2c2c2c;-webkit-text-stroke:0;transform:scaleX(0.83);transform-origin:0 0">$3,363.50</div>
<div class="t" style="left:152.3px;top:130.858px;line-height:9px;font-size:7.2px;color:#2c2c2c;-webkit-text-stroke:0;transform:scaleX(0.83);transform-origin:0 0">$778.40</div>
<div class="t" style="left:193.3px;top:130.858px;line-height:9px;font-size:7.2px;color:#2c2c2c;-webkit-text-stroke:0;transform:scaleX(0.83);transform-origin:0 0">$778.40</div>
<div class="t" style="left:234.3px;top:130.858px;line-height:9px;font-size:7.2px;color:#2c2c2c;-webkit-text-stroke:0;transform:scaleX(0.83);transform-origin:0 0">$0.00</div>
<div class="t" style="left:275.3px;top:130.858px;line-height:9px;font-size:7.2px;color:#2c2c2c;-webkit-text-stroke:0;transform:scaleX(0.83);transform-origin:0 0">$9.10</div>
<div class="t" style="left:315.3px;top:130.858px;line-height:9px;font-size:7.2px;color:#2c2c2c;-webkit-text-stroke:0;transform:scaleX(0.83);transform-origin:0 0">$0.00</div>
<div class="t" style="left:356.3px;top:130.858px;line-height:9px;font-size:7.2px;color:#2c2c2c;-webkit-text-stroke:0;transform:scaleX(0.83);transform-origin:0 0">$0.00</div>
<div class="t" style="left:397.3px;top:130.858px;line-height:9px;font-size:7.2px;color:#2c2c2c;-webkit-text-stroke:0;transform:scaleX(0.83);transform-origin:0 0">100.00%</div>
<div class="t" style="left:438.3px;top:130.858px;line-height:9px;font-size:7.2px;color:#2c2c2c;-webkit-text-stroke:0;transform:scaleX(0.83);transform-origin:0 0">$389.20</div>
<div class="t" style="left:479.3px;top:130.858px;line-height:9px;font-size:7.2px;color:#2c2c2c;-webkit-text-stroke:0;transform:scaleX(0.83);transform-origin:0 0">$389.20</div>
<div class="t" style="left:520.3px;top:130.858px;line-height:9px;font-size:7.2px;color:#2c2c2c;-webkit-text-stroke:0;transform:scaleX(0.83);transform-origin:0 0">$0.00</div>
<div class="t" style="left:561.3px;top:130.858px;line-height:9px;font-size:7.2px;color:#2c2c2c;-webkit-text-stroke:0;transform:scaleX(0.83);transform-origin:0 0">$581.00</div>
<div class="t" style="left:602.3px;top:130.858px;line-height:9px;font-size:7.2px;color:#2c2c2c;-webkit-text-stroke:0;transform:scaleX(0.83);transform-origin:0 0">$0.00</div>
<div class="t" style="left:643.3px;top:130.858px;line-height:9px;font-size:7.2px;color:#2c2c2c;-webkit-text-stroke:0;transform:scaleX(0.83);transform-origin:0 0">3.00</div>
<div class="t" style="left:684.3px;top:130.858px;line-height:9px;font-size:7.2px;color:#2c2c2c;-webkit-text-stroke:0;transform:scaleX(0.83);transform-origin:0 0">$73.50</div>
<div class="t" style="left:725.3px;top:130.858px;line-height:9px;font-size:7.2px;color:#2c2c2c;-webkit-text-stroke:0;transform:scaleX(0.83);transform-origin:0 0">$411.25</div>
<div class="t" style="left:766.3px;top:130.858px;line-height:9px;font-size:7.2px;color:#2c2c2c;-webkit-text-stroke:0;transform:scaleX(0.83);transform-origin:0 0">$22.05</div>
<div class="t" style="left:807.3px;top:130.858px;line-height:9px;font-size:7.2px;color:#2c2c2c;-webkit-text-stroke:0;transform:scaleX(0.83);transform-origin:0 0">5.26%</div>
<div class="t" style="left:5.3px;top:141.651px;line-height:9px;font-size:7.2px;color:#2c2c2c;-webkit-text-stroke:0;transform:scaleX(0.83);transform-origin:0 0">3/16/2026</div>
<div class="t" style="left:70.3px;top:141.651px;line-height:9px;font-size:7.2px;color:#2c2c2c;-webkit-text-stroke:0;transform:scaleX(0.83);transform-origin:0 0">1</div>
<div class="t" style="left:111.3px;top:141.651px;line-height:9px;font-size:7.2px;color:#2c2c2c;-webkit-text-stroke:0;transform:scaleX(0.83);transform-origin:0 0">$3,161.90</div>
<div class="t" style="left:152.3px;top:141.651px;line-height:9px;font-size:7.2px;color:#ee3038;-webkit-text-stroke:0;transform:scaleX(0.83);transform-origin:0 0">($201.60)</div>
<div class="t" style="left:193.3px;top:141.651px;line-height:9px;font-size:7.2px;color:#2c2c2c;-webkit-text-stroke:0;transform:scaleX(0.83);transform-origin:0 0">$0.00</div>
<div class="t" style="left:234.3px;top:141.651px;line-height:9px;font-size:7.2px;color:#ee3038;-webkit-text-stroke:0;transform:scaleX(0.83);transform-origin:0 0">($201.60)</div>
<div class="t" style="left:275.3px;top:141.651px;line-height:9px;font-size:7.2px;color:#2c2c2c;-webkit-text-stroke:0;transform:scaleX(0.83);transform-origin:0 0">$9.10</div>
<div class="t" style="left:315.3px;top:141.651px;line-height:9px;font-size:7.2px;color:#ee3038;-webkit-text-stroke:0;transform:scaleX(0.83);transform-origin:0 0">($201.60)</div>
<div class="t" style="left:356.3px;top:141.651px;line-height:9px;font-size:7.2px;color:#ee3038;-webkit-text-stroke:0;transform:scaleX(0.83);transform-origin:0 0">($201.60)</div>
<div class="t" style="left:397.3px;top:141.651px;line-height:9px;font-size:7.2px;color:#2c2c2c;-webkit-text-stroke:0;transform:scaleX(0.83);transform-origin:0 0">0.00%</div>
<div class="t" style="left:438.3px;top:141.651px;line-height:9px;font-size:7.2px;color:#ee3038;-webkit-text-stroke:0;transform:scaleX(0.83);transform-origin:0 0">($201.60)</div>
<div class="t" style="left:479.3px;top:141.651px;line-height:9px;font-size:7.2px;color:#2c2c2c;-webkit-text-stroke:0;transform:scaleX(0.83);transform-origin:0 0">$0.00</div>
<div class="t" style="left:520.3px;top:141.651px;line-height:9px;font-size:7.2px;color:#ee3038;-webkit-text-stroke:0;transform:scaleX(0.83);transform-origin:0 0">($201.60)</div>
<div class="t" style="left:561.3px;top:141.651px;line-height:9px;font-size:7.2px;color:#2c2c2c;-webkit-text-stroke:0;transform:scaleX(0.83);transform-origin:0 0">$0.00</div>
<div class="t" style="left:602.3px;top:141.651px;line-height:9px;font-size:7.2px;color:#ee3038;-webkit-text-stroke:0;transform:scaleX(0.83);transform-origin:0 0">($201.60)</div>
<div class="t" style="left:643.3px;top:141.651px;line-height:9px;font-size:7.2px;color:#2c2c2c;-webkit-text-stroke:0;transform:scaleX(0.83);transform-origin:0 0">42.00</div>
<div class="t" style="left:684.3px;top:141.651px;line-height:9px;font-size:7.2px;color:#2c2c2c;-webkit-text-stroke:0;transform:scaleX(0.83);transform-origin:0 0">$735.00</div>
<div class="t" style="left:725.3px;top:141.651px;line-height:9px;font-size:7.2px;color:#2c2c2c;-webkit-text-stroke:0;transform:scaleX(0.83);transform-origin:0 0">$465.50</div>
<div class="t" style="left:766.3px;top:141.651px;line-height:9px;font-size:7.2px;color:#2c2c2c;-webkit-text-stroke:0;transform:scaleX(0.83);transform-origin:0 0">$667.10</div>
<div class="t" style="left:807.3px;top:141.651px;line-height:9px;font-size:7.2px;color:#2c2c2c;-webkit-text-stroke:0;transform:scaleX(0.83);transform-origin:0 0">2.63%</div>
<div class="t" style="left:5.3px;top:152.44400000000002px;line-height:9px;font-size:7.2px;color:#2c2c2c;-webkit-text-stroke:0;transform:scaleX(0.83);transform-origin:0 0">3/17/2026</div>
<div class="t" style="left:70.3px;top:152.44400000000002px;line-height:9px;font-size:7.2px;color:#2c2c2c;-webkit-text-stroke:0;transform:scaleX(0.83);transform-origin:0 0">2</div>
<div class="t" style="left:111.3px;top:152.44400000000002px;line-height:9px;font-size:7.2px;color:#2c2c2c;-webkit-text-stroke:0;transform:scaleX(0.83);transform-origin:0 0">$3,299.30</div>
<div class="t" style="left:152.3px;top:152.44400000000002px;line-height:9px;font-size:7.2px;color:#2c2c2c;-webkit-text-stroke:0;transform:scaleX(0.83);transform-origin:0 0">$137.40</div>
<div class="t" style="left:193.3px;top:152.44400000000002px;line-height:9px;font-size:7.2px;color:#2c2c2c;-webkit-text-stroke:0;transform:scaleX(0.83);transform-origin:0 0">$137.40</div>
<div class="t" style="left:234.3px;top:152.44400000000002px;line-height:9px;font-size:7.2px;color:#2c2c2c;-webkit-text-stroke:0;transform:scaleX(0.83);transform-origin:0 0">$0.00</div>
<div class="t" style="left:275.3px;top:152.44400000000002px;line-height:9px;font-size:7.2px;color:#2c2c2c;-webkit-text-stroke:0;transform:scaleX(0.83);transform-origin:0 0">$9.10</div>
<div class="t" style="left:315.3px;top:152.44400000000002px;line-height:9px;font-size:7.2px;color:#ee3038;-webkit-text-stroke:0;transform:scaleX(0.83);transform-origin:0 0">($120.60)</div>
<div class="t" style="left:356.3px;top:152.44400000000002px;line-height:9px;font-size:7.2px;color:#2c2c2c;-webkit-text-stroke:0;transform:scaleX(0.83);transform-origin:0 0">$0.00</div>
<div class="t" style="left:397.3px;top:152.44400000000002px;line-height:9px;font-size:7.2px;color:#2c2c2c;-webkit-text-stroke:0;transform:scaleX(0.83);transform-origin:0 0">100.00%</div>
<div class="t" style="left:438.3px;top:152.44400000000002px;line-height:9px;font-size:7.2px;color:#2c2c2c;-webkit-text-stroke:0;transform:scaleX(0.83);transform-origin:0 0">$68.70</div>
<div class="t" style="left:479.3px;top:152.44400000000002px;line-height:9px;font-size:7.2px;color:#2c2c2c;-webkit-text-stroke:0;transform:scaleX(0.83);transform-origin:0 0">$68.70</div>
<div class="t" style="left:520.3px;top:152.44400000000002px;line-height:9px;font-size:7.2px;color:#2c2c2c;-webkit-text-stroke:0;transform:scaleX(0.83);transform-origin:0 0">$0.00</div>
<div class="t" style="left:561.3px;top:152.44400000000002px;line-height:9px;font-size:7.2px;color:#2c2c2c;-webkit-text-stroke:0;transform:scaleX(0.83);transform-origin:0 0">$81.00</div>
<div class="t" style="left:602.3px;top:152.44400000000002px;line-height:9px;font-size:7.2px;color:#2c2c2c;-webkit-text-stroke:0;transform:scaleX(0.83);transform-origin:0 0">$0.00</div>
<div class="t" style="left:643.3px;top:152.44400000000002px;line-height:9px;font-size:7.2px;color:#2c2c2c;-webkit-text-stroke:0;transform:scaleX(0.83);transform-origin:0 0">0.00</div>
<div class="t" style="left:684.3px;top:152.44400000000002px;line-height:9px;font-size:7.2px;color:#2c2c2c;-webkit-text-stroke:0;transform:scaleX(0.83);transform-origin:0 0">$0.00</div>
<div class="t" style="left:725.3px;top:152.44400000000002px;line-height:9px;font-size:7.2px;color:#2c2c2c;-webkit-text-stroke:0;transform:scaleX(0.83);transform-origin:0 0">$103.25</div>
<div class="t" style="left:766.3px;top:152.44400000000002px;line-height:9px;font-size:7.2px;color:#2c2c2c;-webkit-text-stroke:0;transform:scaleX(0.83);transform-origin:0 0">$34.55</div>
<div class="t" style="left:807.3px;top:152.44400000000002px;line-height:9px;font-size:7.2px;color:#2c2c2c;-webkit-text-stroke:0;transform:scaleX(0.83);transform-origin:0 0">5.26%</div>
<div class="t" style="left:5.3px;top:163.23700000000002px;line-height:9px;font-size:7.2px;color:#2c2c2c;-webkit-text-stroke:0;transform:scaleX(0.83);transform-origin:0 0">3/18/2026</div>
<div class="t" style="left:70.3px;top:163.23700000000002px;line-height:9px;font-size:7.2px;color:#2c2c2c;-webkit-text-stroke:0;transform:scaleX(0.83);transform-origin:0 0">2</div>
<div class="t" style="left:111.3px;top:163.23700000000002px;line-height:9px;font-size:7.2px;color:#2c2c2c;-webkit-text-stroke:0;transform:scaleX(0.83);transform-origin:0 0">$3,802.70</div>
<div class="t" style="left:152.3px;top:163.23700000000002px;line-height:9px;font-size:7.2px;color:#2c2c2c;-webkit-text-stroke:0;transform:scaleX(0.83);transform-origin:0 0">$503.40</div>
<div class="t" style="left:193.3px;top:163.23700000000002px;line-height:9px;font-size:7.2px;color:#2c2c2c;-webkit-text-stroke:0;transform:scaleX(0.83);transform-origin:0 0">$503.40</div>
<div class="t" style="left:234.3px;top:163.23700000000002px;line-height:9px;font-size:7.2px;color:#2c2c2c;-webkit-text-stroke:0;transform:scaleX(0.83);transform-origin:0 0">$0.00</div>
<div class="t" style="left:275.3px;top:163.23700000000002px;line-height:9px;font-size:7.2px;color:#2c2c2c;-webkit-text-stroke:0;transform:scaleX(0.83);transform-origin:0 0">$9.10</div>
<div class="t" style="left:315.3px;top:163.23700000000002px;line-height:9px;font-size:7.2px;color:#2c2c2c;-webkit-text-stroke:0;transform:scaleX(0.83);transform-origin:0 0">$0.00</div>
<div class="t" style="left:356.3px;top:163.23700000000002px;line-height:9px;font-size:7.2px;color:#2c2c2c;-webkit-text-stroke:0;transform:scaleX(0.83);transform-origin:0 0">$0.00</div>
<div class="t" style="left:397.3px;top:163.23700000000002px;line-height:9px;font-size:7.2px;color:#2c2c2c;-webkit-text-stroke:0;transform:scaleX(0.83);transform-origin:0 0">100.00%</div>
<div class="t" style="left:438.3px;top:163.23700000000002px;line-height:9px;font-size:7.2px;color:#2c2c2c;-webkit-text-stroke:0;transform:scaleX(0.83);transform-origin:0 0">$251.70</div>
<div class="t" style="left:479.3px;top:163.23700000000002px;line-height:9px;font-size:7.2px;color:#2c2c2c;-webkit-text-stroke:0;transform:scaleX(0.83);transform-origin:0 0">$251.70</div>
<div class="t" style="left:520.3px;top:163.23700000000002px;line-height:9px;font-size:7.2px;color:#2c2c2c;-webkit-text-stroke:0;transform:scaleX(0.83);transform-origin:0 0">$0.00</div>
<div class="t" style="left:561.3px;top:163.23700000000002px;line-height:9px;font-size:7.2px;color:#2c2c2c;-webkit-text-stroke:0;transform:scaleX(0.83);transform-origin:0 0">$306.00</div>
<div class="t" style="left:602.3px;top:163.23700000000002px;line-height:9px;font-size:7.2px;color:#2c2c2c;-webkit-text-stroke:0;transform:scaleX(0.83);transform-origin:0 0">$0.00</div>
<div class="t" style="left:643.3px;top:163.23700000000002px;line-height:9px;font-size:7.2px;color:#2c2c2c;-webkit-text-stroke:0;transform:scaleX(0.83);transform-origin:0 0">9.00</div>
<div class="t" style="left:684.3px;top:163.23700000000002px;line-height:9px;font-size:7.2px;color:#2c2c2c;-webkit-text-stroke:0;transform:scaleX(0.83);transform-origin:0 0">$222.25</div>
<div class="t" style="left:725.3px;top:163.23700000000002px;line-height:9px;font-size:7.2px;color:#2c2c2c;-webkit-text-stroke:0;transform:scaleX(0.83);transform-origin:0 0">$350.00</div>
<div class="t" style="left:766.3px;top:163.23700000000002px;line-height:9px;font-size:7.2px;color:#2c2c2c;-webkit-text-stroke:0;transform:scaleX(0.83);transform-origin:0 0">$98.30</div>
<div class="t" style="left:807.3px;top:163.23700000000002px;line-height:9px;font-size:7.2px;color:#2c2c2c;-webkit-text-stroke:0;transform:scaleX(0.83);transform-origin:0 0">5.26%</div>
<div class="t" style="left:5.3px;top:174.03px;line-height:9px;font-size:7.2px;color:#2c2c2c;-webkit-text-stroke:0;transform:scaleX(0.83);transform-origin:0 0">3/20/2026</div>
<div class="t" style="left:70.3px;top:174.03px;line-height:9px;font-size:7.2px;color:#2c2c2c;-webkit-text-stroke:0;transform:scaleX(0.83);transform-origin:0 0">2</div>
<div class="t" style="left:111.3px;top:174.03px;line-height:9px;font-size:7.2px;color:#2c2c2c;-webkit-text-stroke:0;transform:scaleX(0.83);transform-origin:0 0">$4,311.10</div>
<div class="t" style="left:152.3px;top:174.03px;line-height:9px;font-size:7.2px;color:#2c2c2c;-webkit-text-stroke:0;transform:scaleX(0.83);transform-origin:0 0">$508.40</div>
<div class="t" style="left:193.3px;top:174.03px;line-height:9px;font-size:7.2px;color:#2c2c2c;-webkit-text-stroke:0;transform:scaleX(0.83);transform-origin:0 0">$508.40</div>
<div class="t" style="left:234.3px;top:174.03px;line-height:9px;font-size:7.2px;color:#2c2c2c;-webkit-text-stroke:0;transform:scaleX(0.83);transform-origin:0 0">$0.00</div>
<div class="t" style="left:275.3px;top:174.03px;line-height:9px;font-size:7.2px;color:#2c2c2c;-webkit-text-stroke:0;transform:scaleX(0.83);transform-origin:0 0">$9.10</div>
<div class="t" style="left:315.3px;top:174.03px;line-height:9px;font-size:7.2px;color:#2c2c2c;-webkit-text-stroke:0;transform:scaleX(0.83);transform-origin:0 0">$0.00</div>
<div class="t" style="left:356.3px;top:174.03px;line-height:9px;font-size:7.2px;color:#2c2c2c;-webkit-text-stroke:0;transform:scaleX(0.83);transform-origin:0 0">$0.00</div>
<div class="t" style="left:397.3px;top:174.03px;line-height:9px;font-size:7.2px;color:#2c2c2c;-webkit-text-stroke:0;transform:scaleX(0.83);transform-origin:0 0">100.00%</div>
<div class="t" style="left:438.3px;top:174.03px;line-height:9px;font-size:7.2px;color:#2c2c2c;-webkit-text-stroke:0;transform:scaleX(0.83);transform-origin:0 0">$254.20</div>
<div class="t" style="left:479.3px;top:174.03px;line-height:9px;font-size:7.2px;color:#2c2c2c;-webkit-text-stroke:0;transform:scaleX(0.83);transform-origin:0 0">$254.20</div>
<div class="t" style="left:520.3px;top:174.03px;line-height:9px;font-size:7.2px;color:#2c2c2c;-webkit-text-stroke:0;transform:scaleX(0.83);transform-origin:0 0">$0.00</div>
<div class="t" style="left:561.3px;top:174.03px;line-height:9px;font-size:7.2px;color:#2c2c2c;-webkit-text-stroke:0;transform:scaleX(0.83);transform-origin:0 0">$311.00</div>
<div class="t" style="left:602.3px;top:174.03px;line-height:9px;font-size:7.2px;color:#2c2c2c;-webkit-text-stroke:0;transform:scaleX(0.83);transform-origin:0 0">$0.00</div>
<div class="t" style="left:643.3px;top:174.03px;line-height:9px;font-size:7.2px;color:#2c2c2c;-webkit-text-stroke:0;transform:scaleX(0.83);transform-origin:0 0">3.00</div>
<div class="t" style="left:684.3px;top:174.03px;line-height:9px;font-size:7.2px;color:#2c2c2c;-webkit-text-stroke:0;transform:scaleX(0.83);transform-origin:0 0">$147.00</div>
<div class="t" style="left:725.3px;top:174.03px;line-height:9px;font-size:7.2px;color:#2c2c2c;-webkit-text-stroke:0;transform:scaleX(0.83);transform-origin:0 0">$350.00</div>
<div class="t" style="left:766.3px;top:174.03px;line-height:9px;font-size:7.2px;color:#2c2c2c;-webkit-text-stroke:0;transform:scaleX(0.83);transform-origin:0 0">$95.80</div>
<div class="t" style="left:807.3px;top:174.03px;line-height:9px;font-size:7.2px;color:#2c2c2c;-webkit-text-stroke:0;transform:scaleX(0.83);transform-origin:0 0">5.26%</div>
<div class="t" style="left:5.3px;top:184.82299999999998px;line-height:9px;font-size:7.2px;color:#2c2c2c;-webkit-text-stroke:0;transform:scaleX(0.83);transform-origin:0 0">3/23/2026</div>
<div class="t" style="left:70.3px;top:184.82299999999998px;line-height:9px;font-size:7.2px;color:#2c2c2c;-webkit-text-stroke:0;transform:scaleX(0.83);transform-origin:0 0">4</div>
<div class="t" style="left:111.3px;top:184.82299999999998px;line-height:9px;font-size:7.2px;color:#2c2c2c;-webkit-text-stroke:0;transform:scaleX(0.83);transform-origin:0 0">$3,663.80</div>
<div class="t" style="left:152.3px;top:184.82299999999998px;line-height:9px;font-size:7.2px;color:#ee3038;-webkit-text-stroke:0;transform:scaleX(0.83);transform-origin:0 0">($647.30)</div>
<div class="t" style="left:193.3px;top:184.82299999999998px;line-height:9px;font-size:7.2px;color:#2c2c2c;-webkit-text-stroke:0;transform:scaleX(0.83);transform-origin:0 0">$165.40</div>
<div class="t" style="left:234.3px;top:184.82299999999998px;line-height:9px;font-size:7.2px;color:#ee3038;-webkit-text-stroke:0;transform:scaleX(0.83);transform-origin:0 0">($812.70)</div>
<div class="t" style="left:275.3px;top:184.82299999999998px;line-height:9px;font-size:7.2px;color:#2c2c2c;-webkit-text-stroke:0;transform:scaleX(0.83);transform-origin:0 0">$27.30</div>
<div class="t" style="left:315.3px;top:184.82299999999998px;line-height:9px;font-size:7.2px;color:#ee3038;-webkit-text-stroke:0;transform:scaleX(0.83);transform-origin:0 0">($812.70)</div>
<div class="t" style="left:356.3px;top:184.82299999999998px;line-height:9px;font-size:7.2px;color:#ee3038;-webkit-text-stroke:0;transform:scaleX(0.83);transform-origin:0 0">($812.70)</div>
<div class="t" style="left:397.3px;top:184.82299999999998px;line-height:9px;font-size:7.2px;color:#2c2c2c;-webkit-text-stroke:0;transform:scaleX(0.83);transform-origin:0 0">50.00%</div>
<div class="t" style="left:438.3px;top:184.82299999999998px;line-height:9px;font-size:7.2px;color:#ee3038;-webkit-text-stroke:0;transform:scaleX(0.83);transform-origin:0 0">($161.83)</div>
<div class="t" style="left:479.3px;top:184.82299999999998px;line-height:9px;font-size:7.2px;color:#2c2c2c;-webkit-text-stroke:0;transform:scaleX(0.83);transform-origin:0 0">$82.70</div>
<div class="t" style="left:520.3px;top:184.82299999999998px;line-height:9px;font-size:7.2px;color:#ee3038;-webkit-text-stroke:0;transform:scaleX(0.83);transform-origin:0 0">($406.35)</div>
<div class="t" style="left:561.3px;top:184.82299999999998px;line-height:9px;font-size:7.2px;color:#2c2c2c;-webkit-text-stroke:0;transform:scaleX(0.83);transform-origin:0 0">$111.00</div>
<div class="t" style="left:602.3px;top:184.82299999999998px;line-height:9px;font-size:7.2px;color:#ee3038;-webkit-text-stroke:0;transform:scaleX(0.83);transform-origin:0 0">($422.10)</div>
<div class="t" style="left:643.3px;top:184.82299999999998px;line-height:9px;font-size:7.2px;color:#2c2c2c;-webkit-text-stroke:0;transform:scaleX(0.83);transform-origin:0 0">60.00</div>
<div class="t" style="left:684.3px;top:184.82299999999998px;line-height:9px;font-size:7.2px;color:#2c2c2c;-webkit-text-stroke:0;transform:scaleX(0.83);transform-origin:0 0">$294.88</div>
<div class="t" style="left:725.3px;top:184.82299999999998px;line-height:9px;font-size:7.2px;color:#2c2c2c;-webkit-text-stroke:0;transform:scaleX(0.83);transform-origin:0 0">$101.50</div>
<div class="t" style="left:766.3px;top:184.82299999999998px;line-height:9px;font-size:7.2px;color:#2c2c2c;-webkit-text-stroke:0;transform:scaleX(0.83);transform-origin:0 0">$263.33</div>
<div class="t" style="left:807.3px;top:184.82299999999998px;line-height:9px;font-size:7.2px;color:#2c2c2c;-webkit-text-stroke:0;transform:scaleX(0.83);transform-origin:0 0">10.53%</div>
<div class="t" style="left:5.3px;top:195.61599999999999px;line-height:9px;font-size:7.2px;color:#2c2c2c;-webkit-text-stroke:0;transform:scaleX(0.83);transform-origin:0 0">3/24/2026</div>
<div class="t" style="left:70.3px;top:195.61599999999999px;line-height:9px;font-size:7.2px;color:#2c2c2c;-webkit-text-stroke:0;transform:scaleX(0.83);transform-origin:0 0">3</div>
<div class="t" style="left:111.3px;top:195.61599999999999px;line-height:9px;font-size:7.2px;color:#2c2c2c;-webkit-text-stroke:0;transform:scaleX(0.83);transform-origin:0 0">$3,906.10</div>
<div class="t" style="left:152.3px;top:195.61599999999999px;line-height:9px;font-size:7.2px;color:#2c2c2c;-webkit-text-stroke:0;transform:scaleX(0.83);transform-origin:0 0">$242.30</div>
<div class="t" style="left:193.3px;top:195.61599999999999px;line-height:9px;font-size:7.2px;color:#2c2c2c;-webkit-text-stroke:0;transform:scaleX(0.83);transform-origin:0 0">$625.90</div>
<div class="t" style="left:234.3px;top:195.61599999999999px;line-height:9px;font-size:7.2px;color:#ee3038;-webkit-text-stroke:0;transform:scaleX(0.83);transform-origin:0 0">($383.60)</div>
<div class="t" style="left:275.3px;top:195.61599999999999px;line-height:9px;font-size:7.2px;color:#2c2c2c;-webkit-text-stroke:0;transform:scaleX(0.83);transform-origin:0 0">$18.20</div>
<div class="t" style="left:315.3px;top:195.61599999999999px;line-height:9px;font-size:7.2px;color:#ee3038;-webkit-text-stroke:0;transform:scaleX(0.83);transform-origin:0 0">($570.40)</div>
<div class="t" style="left:356.3px;top:195.61599999999999px;line-height:9px;font-size:7.2px;color:#ee3038;-webkit-text-stroke:0;transform:scaleX(0.83);transform-origin:0 0">($383.60)</div>
<div class="t" style="left:397.3px;top:195.61599999999999px;line-height:9px;font-size:7.2px;color:#2c2c2c;-webkit-text-stroke:0;transform:scaleX(0.83);transform-origin:0 0">66.67%</div>
<div class="t" style="left:438.3px;top:195.61599999999999px;line-height:9px;font-size:7.2px;color:#2c2c2c;-webkit-text-stroke:0;transform:scaleX(0.83);transform-origin:0 0">$80.77</div>
<div class="t" style="left:479.3px;top:195.61599999999999px;line-height:9px;font-size:7.2px;color:#2c2c2c;-webkit-text-stroke:0;transform:scaleX(0.83);transform-origin:0 0">$312.95</div>
<div class="t" style="left:520.3px;top:195.61599999999999px;line-height:9px;font-size:7.2px;color:#ee3038;-webkit-text-stroke:0;transform:scaleX(0.83);transform-origin:0 0">($383.60)</div>
<div class="t" style="left:561.3px;top:195.61599999999999px;line-height:9px;font-size:7.2px;color:#2c2c2c;-webkit-text-stroke:0;transform:scaleX(0.83);transform-origin:0 0">$428.50</div>
<div class="t" style="left:602.3px;top:195.61599999999999px;line-height:9px;font-size:7.2px;color:#ee3038;-webkit-text-stroke:0;transform:scaleX(0.83);transform-origin:0 0">($383.60)</div>
<div class="t" style="left:643.3px;top:195.61599999999999px;line-height:9px;font-size:7.2px;color:#2c2c2c;-webkit-text-stroke:0;transform:scaleX(0.83);transform-origin:0 0">57.00</div>
<div class="t" style="left:684.3px;top:195.61599999999999px;line-height:9px;font-size:7.2px;color:#2c2c2c;-webkit-text-stroke:0;transform:scaleX(0.83);transform-origin:0 0">$259.00</div>
<div class="t" style="left:725.3px;top:195.61599999999999px;line-height:9px;font-size:7.2px;color:#2c2c2c;-webkit-text-stroke:0;transform:scaleX(0.83);transform-origin:0 0">$315.00</div>
<div class="t" style="left:766.3px;top:195.61599999999999px;line-height:9px;font-size:7.2px;color:#2c2c2c;-webkit-text-stroke:0;transform:scaleX(0.83);transform-origin:0 0">$234.23</div>
<div class="t" style="left:807.3px;top:195.61599999999999px;line-height:9px;font-size:7.2px;color:#2c2c2c;-webkit-text-stroke:0;transform:scaleX(0.83);transform-origin:0 0">7.89%</div>
<div class="t" style="left:5.3px;top:206.409px;line-height:9px;font-size:7.2px;color:#2c2c2c;-webkit-text-stroke:0;transform:scaleX(0.83);transform-origin:0 0">3/25/2026</div>
<div class="t" style="left:70.3px;top:206.409px;line-height:9px;font-size:7.2px;color:#2c2c2c;-webkit-text-stroke:0;transform:scaleX(0.83);transform-origin:0 0">2</div>
<div class="t" style="left:111.3px;top:206.409px;line-height:9px;font-size:7.2px;color:#2c2c2c;-webkit-text-stroke:0;transform:scaleX(0.83);transform-origin:0 0">$4,369.50</div>
<div class="t" style="left:152.3px;top:206.409px;line-height:9px;font-size:7.2px;color:#2c2c2c;-webkit-text-stroke:0;transform:scaleX(0.83);transform-origin:0 0">$463.40</div>
<div class="t" style="left:193.3px;top:206.409px;line-height:9px;font-size:7.2px;color:#2c2c2c;-webkit-text-stroke:0;transform:scaleX(0.83);transform-origin:0 0">$463.40</div>
<div class="t" style="left:234.3px;top:206.409px;line-height:9px;font-size:7.2px;color:#2c2c2c;-webkit-text-stroke:0;transform:scaleX(0.83);transform-origin:0 0">$0.00</div>
<div class="t" style="left:275.3px;top:206.409px;line-height:9px;font-size:7.2px;color:#2c2c2c;-webkit-text-stroke:0;transform:scaleX(0.83);transform-origin:0 0">$9.10</div>
<div class="t" style="left:315.3px;top:206.409px;line-height:9px;font-size:7.2px;color:#ee3038;-webkit-text-stroke:0;transform:scaleX(0.83);transform-origin:0 0">($304.40)</div>
<div class="t" style="left:356.3px;top:206.409px;line-height:9px;font-size:7.2px;color:#2c2c2c;-webkit-text-stroke:0;transform:scaleX(0.83);transform-origin:0 0">$0.00</div>
<div class="t" style="left:397.3px;top:206.409px;line-height:9px;font-size:7.2px;color:#2c2c2c;-webkit-text-stroke:0;transform:scaleX(0.83);transform-origin:0 0">100.00%</div>
<div class="t" style="left:438.3px;top:206.409px;line-height:9px;font-size:7.2px;color:#2c2c2c;-webkit-text-stroke:0;transform:scaleX(0.83);transform-origin:0 0">$231.70</div>
<div class="t" style="left:479.3px;top:206.409px;line-height:9px;font-size:7.2px;color:#2c2c2c;-webkit-text-stroke:0;transform:scaleX(0.83);transform-origin:0 0">$231.70</div>
<div class="t" style="left:520.3px;top:206.409px;line-height:9px;font-size:7.2px;color:#2c2c2c;-webkit-text-stroke:0;transform:scaleX(0.83);transform-origin:0 0">$0.00</div>
<div class="t" style="left:561.3px;top:206.409px;line-height:9px;font-size:7.2px;color:#2c2c2c;-webkit-text-stroke:0;transform:scaleX(0.83);transform-origin:0 0">$266.00</div>
<div class="t" style="left:602.3px;top:206.409px;line-height:9px;font-size:7.2px;color:#2c2c2c;-webkit-text-stroke:0;transform:scaleX(0.83);transform-origin:0 0">$0.00</div>
<div class="t" style="left:643.3px;top:206.409px;line-height:9px;font-size:7.2px;color:#2c2c2c;-webkit-text-stroke:0;transform:scaleX(0.83);transform-origin:0 0">3.00</div>
<div class="t" style="left:684.3px;top:206.409px;line-height:9px;font-size:7.2px;color:#2c2c2c;-webkit-text-stroke:0;transform:scaleX(0.83);transform-origin:0 0">$105.00</div>
<div class="t" style="left:725.3px;top:206.409px;line-height:9px;font-size:7.2px;color:#2c2c2c;-webkit-text-stroke:0;transform:scaleX(0.83);transform-origin:0 0">$350.00</div>
<div class="t" style="left:766.3px;top:206.409px;line-height:9px;font-size:7.2px;color:#2c2c2c;-webkit-text-stroke:0;transform:scaleX(0.83);transform-origin:0 0">$118.30</div>
<div class="t" style="left:807.3px;top:206.409px;line-height:9px;font-size:7.2px;color:#2c2c2c;-webkit-text-stroke:0;transform:scaleX(0.83);transform-origin:0 0">5.26%</div>
<div class="t" style="left:5.3px;top:217.202px;line-height:9px;font-size:7.2px;color:#2c2c2c;-webkit-text-stroke:0;transform:scaleX(0.83);transform-origin:0 0">3/26/2026</div>
<div class="t" style="left:70.3px;top:217.202px;line-height:9px;font-size:7.2px;color:#2c2c2c;-webkit-text-stroke:0;transform:scaleX(0.83);transform-origin:0 0">3</div>
<div class="t" style="left:111.3px;top:217.202px;line-height:9px;font-size:7.2px;color:#2c2c2c;-webkit-text-stroke:0;transform:scaleX(0.83);transform-origin:0 0">$4,204.30</div>
<div class="t" style="left:152.3px;top:217.202px;line-height:9px;font-size:7.2px;color:#ee3038;-webkit-text-stroke:0;transform:scaleX(0.83);transform-origin:0 0">($165.20)</div>
<div class="t" style="left:193.3px;top:217.202px;line-height:9px;font-size:7.2px;color:#2c2c2c;-webkit-text-stroke:0;transform:scaleX(0.83);transform-origin:0 0">$431.90</div>
<div class="t" style="left:234.3px;top:217.202px;line-height:9px;font-size:7.2px;color:#ee3038;-webkit-text-stroke:0;transform:scaleX(0.83);transform-origin:0 0">($597.10)</div>
<div class="t" style="left:275.3px;top:217.202px;line-height:9px;font-size:7.2px;color:#2c2c2c;-webkit-text-stroke:0;transform:scaleX(0.83);transform-origin:0 0">$18.20</div>
<div class="t" style="left:315.3px;top:217.202px;line-height:9px;font-size:7.2px;color:#ee3038;-webkit-text-stroke:0;transform:scaleX(0.83);transform-origin:0 0">($597.10)</div>
<div class="t" style="left:356.3px;top:217.202px;line-height:9px;font-size:7.2px;color:#ee3038;-webkit-text-stroke:0;transform:scaleX(0.83);transform-origin:0 0">($597.10)</div>
<div class="t" style="left:397.3px;top:217.202px;line-height:9px;font-size:7.2px;color:#2c2c2c;-webkit-text-stroke:0;transform:scaleX(0.83);transform-origin:0 0">66.67%</div>
<div class="t" style="left:438.3px;top:217.202px;line-height:9px;font-size:7.2px;color:#ee3038;-webkit-text-stroke:0;transform:scaleX(0.83);transform-origin:0 0">($55.07)</div>
<div class="t" style="left:479.3px;top:217.202px;line-height:9px;font-size:7.2px;color:#2c2c2c;-webkit-text-stroke:0;transform:scaleX(0.83);transform-origin:0 0">$215.95</div>
<div class="t" style="left:520.3px;top:217.202px;line-height:9px;font-size:7.2px;color:#ee3038;-webkit-text-stroke:0;transform:scaleX(0.83);transform-origin:0 0">($597.10)</div>
<div class="t" style="left:561.3px;top:217.202px;line-height:9px;font-size:7.2px;color:#2c2c2c;-webkit-text-stroke:0;transform:scaleX(0.83);transform-origin:0 0">$288.50</div>
<div class="t" style="left:602.3px;top:217.202px;line-height:9px;font-size:7.2px;color:#ee3038;-webkit-text-stroke:0;transform:scaleX(0.83);transform-origin:0 0">($597.10)</div>
<div class="t" style="left:643.3px;top:217.202px;line-height:9px;font-size:7.2px;color:#2c2c2c;-webkit-text-stroke:0;transform:scaleX(0.83);transform-origin:0 0">51.00</div>
<div class="t" style="left:684.3px;top:217.202px;line-height:9px;font-size:7.2px;color:#2c2c2c;-webkit-text-stroke:0;transform:scaleX(0.83);transform-origin:0 0">$324.33</div>
<div class="t" style="left:725.3px;top:217.202px;line-height:9px;font-size:7.2px;color:#2c2c2c;-webkit-text-stroke:0;transform:scaleX(0.83);transform-origin:0 0">$254.33</div>
<div class="t" style="left:766.3px;top:217.202px;line-height:9px;font-size:7.2px;color:#2c2c2c;-webkit-text-stroke:0;transform:scaleX(0.83);transform-origin:0 0">$309.40</div>
<div class="t" style="left:807.3px;top:217.202px;line-height:9px;font-size:7.2px;color:#2c2c2c;-webkit-text-stroke:0;transform:scaleX(0.83);transform-origin:0 0">7.89%</div>
<div class="a" style="left:1px;top:269px;width:843px;height:250px;border:1px solid #5a5a5a;background:#fff"></div>
<div class="a" style="left:2px;top:270px;width:841px;height:17.5px;background:#e4e4e4"></div>
<div class="a" style="left:2px;top:287px;width:841px;height:1px;background:#666"></div>
<div class="t" style="left:5.8px;top:274.5px;line-height:9px;font-size:6.6px;color:#333;">Graph</div>
<div class="sel" style="left:27px;top:273px;width:77px;height:12px"></div>
<div class="t" style="left:30.6px;top:274.1px;line-height:9px;font-size:6.5px;color:#222">Cumulative Net Profit</div>
<div class="chev" style="left:96.8px;top:275.9px"></div>
<svg class="a" style="left:0;top:0" width="1000" height="520" viewBox="0 0 1000 520"><rect x="120" y="290.9" width="36" height="218.10000000000002" fill="#e4e4e6"/><rect x="192" y="290.9" width="36" height="218.10000000000002" fill="#e4e4e6"/><rect x="264" y="290.9" width="36" height="218.10000000000002" fill="#e4e4e6"/><rect x="336" y="290.9" width="36" height="218.10000000000002" fill="#e4e4e6"/><rect x="408" y="290.9" width="36" height="218.10000000000002" fill="#e4e4e6"/><rect x="480" y="290.9" width="36" height="218.10000000000002" fill="#e4e4e6"/><rect x="552" y="290.9" width="36" height="218.10000000000002" fill="#e4e4e6"/><rect x="624" y="290.9" width="36" height="218.10000000000002" fill="#e4e4e6"/><rect x="696" y="290.9" width="36" height="218.10000000000002" fill="#e4e4e6"/><rect x="768" y="290.9" width="73" height="218.10000000000002" fill="#e4e4e6"/><line x1="48" y1="496.50" x2="841" y2="496.50" stroke="#a6a6a6" stroke-width="0.9" stroke-dasharray="2.7,1.3"/><line x1="48" y1="481.28" x2="841" y2="481.28" stroke="#a6a6a6" stroke-width="0.9" stroke-dasharray="2.7,1.3"/><line x1="48" y1="466.05" x2="841" y2="466.05" stroke="#a6a6a6" stroke-width="0.9" stroke-dasharray="2.7,1.3"/><line x1="48" y1="450.83" x2="841" y2="450.83" stroke="#a6a6a6" stroke-width="0.9" stroke-dasharray="2.7,1.3"/><line x1="48" y1="435.61" x2="841" y2="435.61" stroke="#a6a6a6" stroke-width="0.9" stroke-dasharray="2.7,1.3"/><line x1="48" y1="420.38" x2="841" y2="420.38" stroke="#a6a6a6" stroke-width="0.9" stroke-dasharray="2.7,1.3"/><line x1="48" y1="405.16" x2="841" y2="405.16" stroke="#a6a6a6" stroke-width="0.9" stroke-dasharray="2.7,1.3"/><line x1="48" y1="389.94" x2="841" y2="389.94" stroke="#a6a6a6" stroke-width="0.9" stroke-dasharray="2.7,1.3"/><line x1="48" y1="374.72" x2="841" y2="374.72" stroke="#a6a6a6" stroke-width="0.9" stroke-dasharray="2.7,1.3"/><line x1="48" y1="359.49" x2="841" y2="359.49" stroke="#a6a6a6" stroke-width="0.9" stroke-dasharray="2.7,1.3"/><line x1="48" y1="344.27" x2="841" y2="344.27" stroke="#a6a6a6" stroke-width="0.9" stroke-dasharray="2.7,1.3"/><line x1="48" y1="329.05" x2="841" y2="329.05" stroke="#a6a6a6" stroke-width="0.9" stroke-dasharray="2.7,1.3"/><line x1="48" y1="313.82" x2="841" y2="313.82" stroke="#a6a6a6" stroke-width="0.9" stroke-dasharray="2.7,1.3"/><line x1="48" y1="298.60" x2="841" y2="298.60" stroke="#a6a6a6" stroke-width="0.9" stroke-dasharray="2.7,1.3"/><line x1="48.5" y1="290.9" x2="48.5" y2="509" stroke="#a6a6a6" stroke-width="0.9" stroke-dasharray="2.7,1.3"/><line x1="120.5" y1="290.9" x2="120.5" y2="509" stroke="#a6a6a6" stroke-width="0.9" stroke-dasharray="2.7,1.3"/><line x1="156.5" y1="290.9" x2="156.5" y2="509" stroke="#a6a6a6" stroke-width="0.9" stroke-dasharray="2.7,1.3"/><line x1="192.5" y1="290.9" x2="192.5" y2="509" stroke="#a6a6a6" stroke-width="0.9" stroke-dasharray="2.7,1.3"/><line x1="228.5" y1="290.9" x2="228.5" y2="509" stroke="#a6a6a6" stroke-width="0.9" stroke-dasharray="2.7,1.3"/><line x1="264.5" y1="290.9" x2="264.5" y2="509" stroke="#a6a6a6" stroke-width="0.9" stroke-dasharray="2.7,1.3"/><line x1="300.5" y1="290.9" x2="300.5" y2="509" stroke="#a6a6a6" stroke-width="0.9" stroke-dasharray="2.7,1.3"/><line x1="336.5" y1="290.9" x2="336.5" y2="509" stroke="#a6a6a6" stroke-width="0.9" stroke-dasharray="2.7,1.3"/><line x1="372.5" y1="290.9" x2="372.5" y2="509" stroke="#a6a6a6" stroke-width="0.9" stroke-dasharray="2.7,1.3"/><line x1="408.5" y1="290.9" x2="408.5" y2="509" stroke="#a6a6a6" stroke-width="0.9" stroke-dasharray="2.7,1.3"/><line x1="444.5" y1="290.9" x2="444.5" y2="509" stroke="#a6a6a6" stroke-width="0.9" stroke-dasharray="2.7,1.3"/><line x1="480.5" y1="290.9" x2="480.5" y2="509" stroke="#a6a6a6" stroke-width="0.9" stroke-dasharray="2.7,1.3"/><line x1="516.5" y1="290.9" x2="516.5" y2="509" stroke="#a6a6a6" stroke-width="0.9" stroke-dasharray="2.7,1.3"/><line x1="552.5" y1="290.9" x2="552.5" y2="509" stroke="#a6a6a6" stroke-width="0.9" stroke-dasharray="2.7,1.3"/><line x1="588.5" y1="290.9" x2="588.5" y2="509" stroke="#a6a6a6" stroke-width="0.9" stroke-dasharray="2.7,1.3"/><line x1="624.5" y1="290.9" x2="624.5" y2="509" stroke="#a6a6a6" stroke-width="0.9" stroke-dasharray="2.7,1.3"/><line x1="660.5" y1="290.9" x2="660.5" y2="509" stroke="#a6a6a6" stroke-width="0.9" stroke-dasharray="2.7,1.3"/><line x1="696.5" y1="290.9" x2="696.5" y2="509" stroke="#a6a6a6" stroke-width="0.9" stroke-dasharray="2.7,1.3"/><line x1="732.5" y1="290.9" x2="732.5" y2="509" stroke="#a6a6a6" stroke-width="0.9" stroke-dasharray="2.7,1.3"/><line x1="768.5" y1="290.9" x2="768.5" y2="509" stroke="#a6a6a6" stroke-width="0.9" stroke-dasharray="2.7,1.3"/><polygon points="48,509 48,482.37 84,450.08 120,410.29 228,455.15 300,438.36 336,380.55 372,341.05 480,351.28 516,344.30 552,318.76 624,292.96 732,325.81 768,313.51 804,290.00 840,298.38 840.6,509" fill="rgb(82,218,82)" fill-opacity="0.6"/><polyline points="48,509 48,482.37 84,450.08 120,410.29 228,455.15 300,438.36 336,380.55 372,341.05 480,351.28 516,344.30 552,318.76 624,292.96 732,325.81 768,313.51 804,290.00 840,298.38 840.6,509" fill="none" stroke="#40c840" stroke-width="1.2"/><circle cx="624.7" cy="293.26" r="3" fill="#0b5a0b"/><line x1="46.8" y1="290.4" x2="46.8" y2="509" stroke="#8a8a8a" stroke-width="1"/><line x1="44.3" y1="496.50" x2="46.8" y2="496.50" stroke="#555" stroke-width="0.8"/><text x="42.6" y="498.80" text-anchor="end" font-family="Liberation Sans" font-size="6.5" fill="#222">$300.00</text><line x1="44.3" y1="481.28" x2="46.8" y2="481.28" stroke="#555" stroke-width="0.8"/><text x="42.6" y="483.58" text-anchor="end" font-family="Liberation Sans" font-size="6.5" fill="#222">$600.00</text><line x1="44.3" y1="466.05" x2="46.8" y2="466.05" stroke="#555" stroke-width="0.8"/><text x="42.6" y="468.35" text-anchor="end" font-family="Liberation Sans" font-size="6.5" fill="#222">$900.00</text><line x1="44.3" y1="450.83" x2="46.8" y2="450.83" stroke="#555" stroke-width="0.8"/><text x="42.6" y="453.13" text-anchor="end" font-family="Liberation Sans" font-size="6.5" fill="#222">$1,200.00</text><line x1="44.3" y1="435.61" x2="46.8" y2="435.61" stroke="#555" stroke-width="0.8"/><text x="42.6" y="437.91" text-anchor="end" font-family="Liberation Sans" font-size="6.5" fill="#222">$1,500.00</text><line x1="44.3" y1="420.38" x2="46.8" y2="420.38" stroke="#555" stroke-width="0.8"/><text x="42.6" y="422.68" text-anchor="end" font-family="Liberation Sans" font-size="6.5" fill="#222">$1,800.00</text><line x1="44.3" y1="405.16" x2="46.8" y2="405.16" stroke="#555" stroke-width="0.8"/><text x="42.6" y="407.46" text-anchor="end" font-family="Liberation Sans" font-size="6.5" fill="#222">$2,100.00</text><line x1="44.3" y1="389.94" x2="46.8" y2="389.94" stroke="#555" stroke-width="0.8"/><text x="42.6" y="392.24" text-anchor="end" font-family="Liberation Sans" font-size="6.5" fill="#222">$2,400.00</text><line x1="44.3" y1="374.72" x2="46.8" y2="374.72" stroke="#555" stroke-width="0.8"/><text x="42.6" y="377.02" text-anchor="end" font-family="Liberation Sans" font-size="6.5" fill="#222">$2,700.00</text><line x1="44.3" y1="359.49" x2="46.8" y2="359.49" stroke="#555" stroke-width="0.8"/><text x="42.6" y="361.79" text-anchor="end" font-family="Liberation Sans" font-size="6.5" fill="#222">$3,000.00</text><line x1="44.3" y1="344.27" x2="46.8" y2="344.27" stroke="#555" stroke-width="0.8"/><text x="42.6" y="346.57" text-anchor="end" font-family="Liberation Sans" font-size="6.5" fill="#222">$3,300.00</text><line x1="44.3" y1="329.05" x2="46.8" y2="329.05" stroke="#555" stroke-width="0.8"/><text x="42.6" y="331.35" text-anchor="end" font-family="Liberation Sans" font-size="6.5" fill="#222">$3,600.00</text><line x1="44.3" y1="313.82" x2="46.8" y2="313.82" stroke="#555" stroke-width="0.8"/><text x="42.6" y="316.12" text-anchor="end" font-family="Liberation Sans" font-size="6.5" fill="#222">$3,900.00</text><line x1="44.3" y1="298.60" x2="46.8" y2="298.60" stroke="#555" stroke-width="0.8"/><text x="42.6" y="300.90" text-anchor="end" font-family="Liberation Sans" font-size="6.5" fill="#222">$4,200.00</text><text transform="translate(9.6,401) rotate(-90) scale(0.88,1)" text-anchor="middle" font-family="Liberation Sans" font-size="6.9" fill="#222">Cumulative profit ($)</text></svg>
<div class="a" style="left:851px;top:13.8px;width:160px;height:520px;border:1px solid #6a6a6a;background:#fff"></div>
<div class="a" style="left:852px;top:14.8px;width:148px;height:14px;background:linear-gradient(#fff,#fdfdfd 45%,#ececec 62%,#f0f0f0 85%,#f8f8f8)"></div>
<div class="a" style="left:852px;top:28.6px;width:148px;height:1.6px;background:#a4a4a4"></div>
<div class="t" style="left:855.6px;top:17.7px;line-height:9px;font-size:6.6px;color:#333;">Settings</div>
<div class="a" style="left:934px;top:33.4px;width:0.9px;height:55.4px;background:#555"></div>
<div class="a" style="left:934px;top:100.3px;width:0.9px;height:238.2px;background:#555"></div>
<div class="a" style="left:934px;top:350px;width:0.9px;height:67.30000000000001px;background:#555"></div>
<div class="a" style="left:934px;top:428.8px;width:0.9px;height:56.599999999999966px;background:#555"></div>
<div class="a" style="left:934px;top:497px;width:0.9px;height:1px;background:#555"></div>
<div class="t" style="left:868.0px;top:35.8px;line-height:9px;font-size:6.5px;color:#2e2e2e;">Trade End 1</div>
<div class="box" style="left:938px;top:34px;width:70px;height:13px"></div>
<div class="a" style="left:941.7px;top:37.1px;width:6.6px;height:6.6px;border:1.15px solid #1a1a1a;border-radius:50%"></div><div class="a" style="left:944.4px;top:39.8px;width:1.2px;height:1.2px;background:#555;border-radius:50%"></div>
<div class="t" style="left:951.5px;top:36.0px;line-height:9px;font-size:6.3px;color:#222">07:30:00 AM</div>
<div class="t" style="left:868.0px;top:49.3px;line-height:9px;font-size:6.5px;color:#2e2e2e;">Trade Window 2</div>
<div class="cb" style="left:938px;top:50px"><div class="chk"></div></div>
<div class="t" style="left:868.0px;top:63.0px;line-height:9px;font-size:6.5px;color:#2e2e2e;">Trade Start 2</div>
<div class="box" style="left:938px;top:61px;width:70px;height:13px"></div>
<div class="a" style="left:941.7px;top:64.1px;width:6.6px;height:6.6px;border:1.15px solid #1a1a1a;border-radius:50%"></div><div class="a" style="left:944.4px;top:66.8px;width:1.2px;height:1.2px;background:#555;border-radius:50%"></div>
<div class="t" style="left:951.5px;top:63.0px;line-height:9px;font-size:6.3px;color:#222">02:30:00 PM</div>
<div class="t" style="left:868.0px;top:76.9px;line-height:9px;font-size:6.5px;color:#2e2e2e;">Trade End 2</div>
<div class="box" style="left:938px;top:75px;width:70px;height:13px"></div>
<div class="a" style="left:941.7px;top:78.1px;width:6.6px;height:6.6px;border:1.15px solid #1a1a1a;border-radius:50%"></div><div class="a" style="left:944.4px;top:80.8px;width:1.2px;height:1.2px;background:#555;border-radius:50%"></div>
<div class="t" style="left:951.5px;top:77.0px;line-height:9px;font-size:6.3px;color:#222">04:03:00 PM</div>
<div class="a" style="left:854.6px;top:93.4px;width:0;height:0;border-left:3.1px solid transparent;border-right:3.1px solid transparent;border-top:3.3px solid #111"></div>
<div class="t" style="left:865px;top:90.4px;line-height:9px;font-size:6.3px;color:#222;font-weight:bold;">Exit Settings</div>
<div class="t" style="left:868.0px;top:103.2px;line-height:9px;font-size:6.5px;color:#2e2e2e;">Plot Stops/Targets</div>
<div class="cb" style="left:938px;top:103px"><div class="chk"></div></div>
<div class="t" style="left:868.0px;top:117.0px;line-height:9px;font-size:6.5px;color:#2e2e2e;">Stop Type</div>
<div class="sel" style="left:938px;top:115px;width:70px;height:13px"></div>
<div class="t" style="left:941.5px;top:117.0px;line-height:9px;font-size:6.5px;color:#222">Ticks</div>
<div class="t" style="left:868.0px;top:130.5px;line-height:9px;font-size:6.5px;color:#2e2e2e;">Initial Stop Loss Ti...</div>
<div class="box" style="left:938px;top:129px;width:70px;height:12px"></div>
<div class="t" style="left:941.5px;top:130.5px;line-height:9px;font-size:6.5px;color:#222">250</div>
<div class="t" style="left:868.0px;top:144.0px;line-height:9px;font-size:6.5px;color:#2e2e2e;">Target Type</div>
<div class="sel" style="left:938px;top:142px;width:70px;height:13px"></div>
<div class="t" style="left:941.5px;top:144.0px;line-height:9px;font-size:6.5px;color:#222">Swing</div>
<div class="t" style="left:868.0px;top:157.3px;line-height:9px;font-size:6.5px;color:#2e2e2e;">Target ATR Period</div>
<div class="box" style="left:938px;top:156px;width:70px;height:12px"></div>
<div class="t" style="left:941.5px;top:157.5px;line-height:9px;font-size:6.5px;color:#222">10</div>
<div class="t" style="left:868.0px;top:170.5px;line-height:9px;font-size:6.5px;color:#2e2e2e;">Target ATR Multiplier</div>
<div class="box" style="left:938px;top:169px;width:70px;height:12px"></div>
<div class="t" style="left:941.5px;top:170.5px;line-height:9px;font-size:6.5px;color:#222">4</div>
<div class="t" style="left:868.0px;top:183.1px;line-height:9px;font-size:6.5px;color:#2e2e2e;">Target USD Value</div>
<div class="box" style="left:938px;top:182px;width:70px;height:11px"></div>
<div class="t" style="left:941.5px;top:183.0px;line-height:9px;font-size:6.5px;color:#222">200</div>
<div class="t" style="left:868.0px;top:196.2px;line-height:9px;font-size:6.5px;color:#2e2e2e;">Target Tick Value</div>
<div class="box" style="left:938px;top:195px;width:70px;height:11px"></div>
<div class="t" style="left:941.5px;top:196.0px;line-height:9px;font-size:6.5px;color:#222">25</div>
<div class="t" style="left:868.0px;top:209.0px;line-height:9px;font-size:6.5px;color:#2e2e2e;">Target Swing Stren...</div>
<div class="box" style="left:938px;top:208px;width:70px;height:11px"></div>
<div class="t" style="left:941.5px;top:209.0px;line-height:9px;font-size:6.5px;color:#222">5</div>
<div class="t" style="left:868.0px;top:222.0px;line-height:9px;font-size:6.5px;color:#2e2e2e;">BreakEven</div>
<div class="cb" style="left:938px;top:223px"><div class="chk"></div></div>
<div class="t" style="left:868.0px;top:235.1px;line-height:9px;font-size:6.5px;color:#2e2e2e;">BreakEven Offset T...</div>
<div class="box" style="left:938px;top:234px;width:70px;height:11px"></div>
<div class="t" style="left:941.5px;top:235.0px;line-height:9px;font-size:6.5px;color:#222">200</div>
<div class="t" style="left:868.0px;top:247.7px;line-height:9px;font-size:6.5px;color:#2e2e2e;">Trail</div>
<div class="cb" style="left:938px;top:249px"></div>
<div class="t" style="left:868.0px;top:261.0px;line-height:9px;font-size:6.5px;color:#2e2e2e;">Trail Start Ticks</div>
<div class="box" style="left:938px;top:260px;width:70px;height:11px"></div>
<div class="t" style="left:941.5px;top:261.0px;line-height:9px;font-size:6.5px;color:#222">100</div>
<div class="t" style="left:868.0px;top:273.9px;line-height:9px;font-size:6.5px;color:#2e2e2e;">Trail By Ticks</div>
<div class="box" style="left:938px;top:273px;width:70px;height:11px"></div>
<div class="t" style="left:941.5px;top:274.0px;line-height:9px;font-size:6.5px;color:#222">25</div>
<div class="t" style="left:868.0px;top:286.7px;line-height:9px;font-size:6.5px;color:#2e2e2e;">Flip</div>
<div class="cb" style="left:938px;top:288px"><div class="chk"></div></div>
<div class="t" style="left:868.0px;top:299.7px;line-height:9px;font-size:6.5px;color:#2e2e2e;">Time Exit</div>
<div class="cb" style="left:938px;top:301px"><div class="chk"></div></div>
<div class="t" style="left:868.0px;top:312.5px;line-height:9px;font-size:6.5px;color:#2e2e2e;">Entry Candle Open...</div>
<div class="cb" style="left:938px;top:313px"></div>
<div class="t" style="left:868.0px;top:326.3px;line-height:9px;font-size:6.5px;color:#2e2e2e;">Exit Time</div>
<div class="box" style="left:938px;top:324px;width:70px;height:13px"></div>
<div class="a" style="left:941.7px;top:327.1px;width:6.6px;height:6.6px;border:1.15px solid #1a1a1a;border-radius:50%"></div><div class="a" style="left:944.4px;top:329.8px;width:1.2px;height:1.2px;background:#555;border-radius:50%"></div>
<div class="t" style="left:951.5px;top:326.0px;line-height:9px;font-size:6.3px;color:#222">01:00:00 PM</div>
<div class="a" style="left:854.6px;top:342.8px;width:0;height:0;border-left:3.1px solid transparent;border-right:3.1px solid transparent;border-top:3.3px solid #111"></div>
<div class="t" style="left:865px;top:339.8px;line-height:9px;font-size:6.3px;color:#222;font-weight:bold;">Data Series</div>
<div class="t" style="left:868.0px;top:352.9px;line-height:9px;font-size:6.5px;color:#2e2e2e;">Instrument</div>
<div class="box" style="left:938px;top:352px;width:70px;height:11px"></div>
<div class="t" style="left:941.5px;top:353.0px;line-height:9px;font-size:6.5px;color:#222">MNQ 06-26</div>
<div class="t" style="left:868.0px;top:366.3px;line-height:9px;font-size:6.5px;color:#2e2e2e;">Price based on</div>
<div class="sel" style="left:938px;top:364px;width:70px;height:13px"></div>
<div class="t" style="left:941.5px;top:366.0px;line-height:9px;font-size:6.5px;color:#222">Last</div>
<div class="t" style="left:868.0px;top:379.8px;line-height:9px;font-size:6.5px;color:#2e2e2e;">Type</div>
<div class="sel" style="left:938px;top:378px;width:70px;height:12px"></div>
<div class="t" style="left:941.5px;top:379.5px;line-height:9px;font-size:6.5px;color:#222">Minute</div>
<div class="t" style="left:868.0px;top:392.8px;line-height:9px;font-size:6.5px;color:#2e2e2e;">Value</div>
<div class="box" style="left:938px;top:391px;width:70px;height:12px"></div>
<div class="t" style="left:941.5px;top:392.5px;line-height:9px;font-size:6.5px;color:#222">3</div>
<div class="t" style="left:868.0px;top:405.6px;line-height:9px;font-size:6.5px;color:#2e2e2e;">Tick Replay</div>
<div class="cb" style="left:938px;top:406px"></div>
<div class="a" style="left:854.6px;top:421.7px;width:0;height:0;border-left:3.1px solid transparent;border-right:3.1px solid transparent;border-top:3.3px solid #111"></div>
<div class="t" style="left:865px;top:418.7px;line-height:9px;font-size:6.3px;color:#222;font-weight:bold;">Time frame</div>
<div class="t" style="left:868.0px;top:432.0px;line-height:9px;font-size:6.5px;color:#2e2e2e;">Start date</div>
<div class="box" style="left:938px;top:430px;width:70px;height:13px"></div>
<div class="a" style="left:941.8px;top:433.7px;width:6px;height:6px;border:0.8px solid #3a4450;border-top:1.4px solid #1a1a1a;background:linear-gradient(90deg,transparent 0 1.3px,#c8ccd2 1.3px 1.9px,transparent 1.9px 3.1px,#c8ccd2 3.1px 3.7px,transparent 3.7px),linear-gradient(transparent 0 1.2px,#c8ccd2 1.2px 1.8px,transparent 1.8px 2.8px,#c8ccd2 2.8px 3.4px,transparent 3.4px),#8a96a2"></div>
<div class="t" style="left:951.5px;top:432.0px;line-height:9px;font-size:6.3px;color:#222">03/04/2026</div>
<div class="t" style="left:868.0px;top:445.9px;line-height:9px;font-size:6.5px;color:#2e2e2e;">End date</div>
<div class="box" style="left:938px;top:444px;width:70px;height:13px"></div>
<div class="a" style="left:941.8px;top:447.7px;width:6px;height:6px;border:0.8px solid #3a4450;border-top:1.4px solid #1a1a1a;background:linear-gradient(90deg,transparent 0 1.3px,#c8ccd2 1.3px 1.9px,transparent 1.9px 3.1px,#c8ccd2 3.1px 3.7px,transparent 3.7px),linear-gradient(transparent 0 1.2px,#c8ccd2 1.2px 1.8px,transparent 1.8px 2.8px,#c8ccd2 2.8px 3.4px,transparent 3.4px),#8a96a2"></div>
<div class="t" style="left:951.5px;top:446.0px;line-height:9px;font-size:6.3px;color:#222">03/27/2026</div>
<div class="t" style="left:868.0px;top:460.0px;line-height:9px;font-size:6.5px;color:#2e2e2e;">Trading hours</div>
<div class="sel" style="left:938px;top:458px;width:70px;height:13px"></div>
<div class="t" style="left:941.5px;top:460.0px;line-height:9px;font-size:6.5px;color:#222">&lt;Use instrument...</div>
<div class="t" style="left:868.0px;top:473.7px;line-height:9px;font-size:6.5px;color:#2e2e2e;">Break at EOD</div>
<div class="cb" style="left:938px;top:474px"><div class="chk"></div></div>
<div class="a" style="left:854.6px;top:489.7px;width:0;height:0;border-left:3.1px solid transparent;border-right:3.1px solid transparent;border-top:3.3px solid #111"></div>
<div class="t" style="left:865px;top:486.7px;line-height:9px;font-size:6.3px;color:#222;font-weight:bold;">Setup</div>
<div class="t" style="left:988px;top:504.5px;line-height:5px;font-size:3.6px;color:#555">Anan</div>
<div class="a" style="left:0;top:509px;width:1000px;height:9px;background:#eeeeee"></div>
<div class="a" style="left:3px;top:513px;width:983px;height:2px;background:#b0b0b0;border-radius:1px"></div>
<div class="a" style="left:0;top:517.6px;width:1000px;height:3px;background:#000"></div>
<div class="a" style="left:484px;top:518.6px;width:8px;height:1.4px;background:#3c7fd8"></div><div class="a" style="left:487px;top:518.6px;width:24px;height:1.4px;background:repeating-linear-gradient(90deg,#3c86e0 0 2px,#1a3a6a 2px 3px)"></div><div class="a" style="left:513px;top:518.6px;width:5px;height:1.4px;background:#3c86e0"></div><div class="a" style="left:519px;top:518.6px;width:2px;height:1.4px;background:#3c86e0"></div><div class="a" style="left:524px;top:518px;width:1px;height:2px;background:#ccc"></div>
</body></html>
